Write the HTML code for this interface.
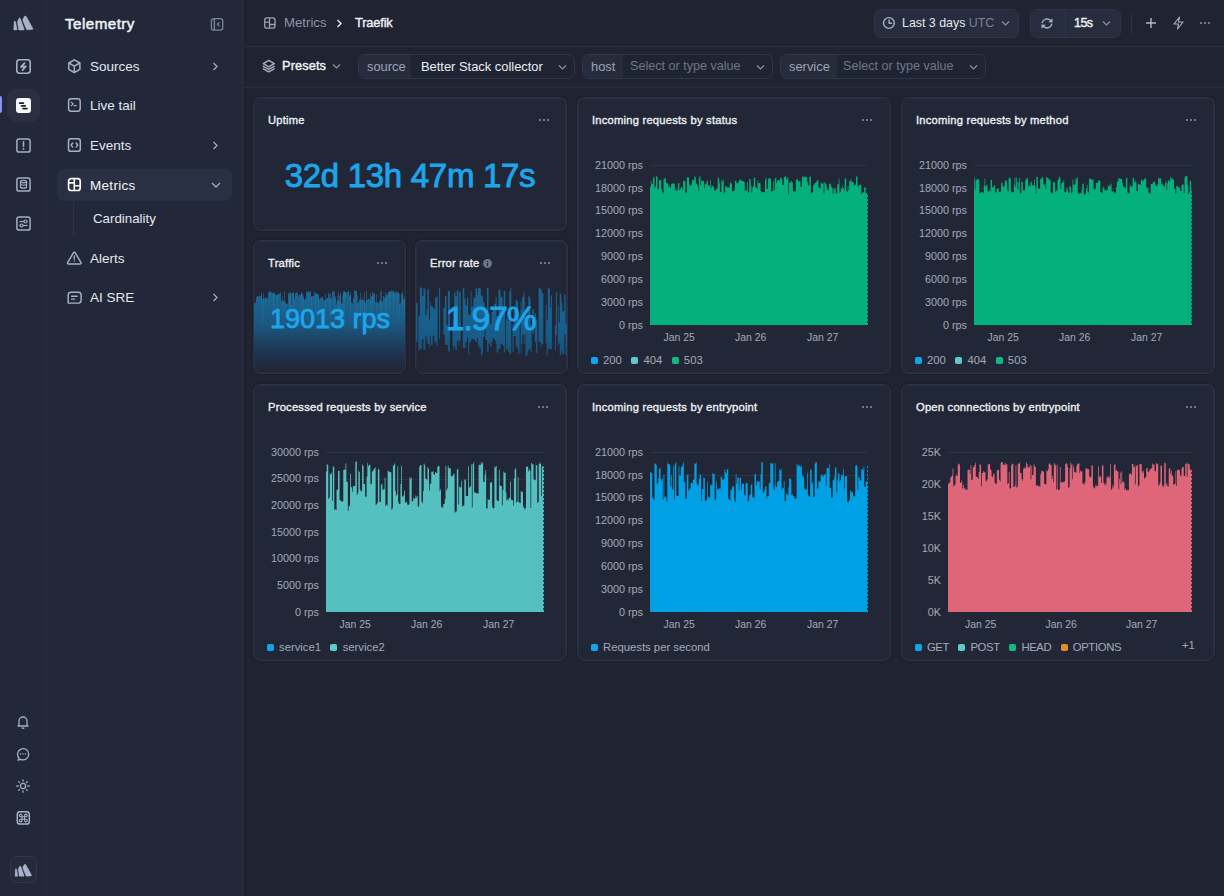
<!DOCTYPE html>
<html><head><meta charset="utf-8">
<style>
*{box-sizing:border-box;margin:0;padding:0}
html,body{width:1224px;height:896px;overflow:hidden;background:#1f2332;font-family:"Liberation Sans",sans-serif;color:#e6e8ee}
.abs{position:absolute}
.rail{position:absolute;left:0;top:0;width:47px;height:896px;background:#222839;border-right:1px solid #282e3f}
.side{position:absolute;left:47px;top:0;width:197px;height:896px;background:#222839;border-right:2px solid #262b3c}
.side:after{content:"";position:absolute;right:-4px;top:0;width:2px;height:896px;background:#1c2030}
.ri{position:absolute;left:16px;width:15px;height:15px}
.ri svg{display:block}
.nav{position:absolute;left:57px;width:175px;height:32px;border-radius:7px}
.nav .ic{position:absolute;left:10px;top:9px;width:14px;height:14px}
.nav .lb{position:absolute;left:33px;top:1px;line-height:32px;font-size:13.5px;color:#e4e7ee}
.nav .ch{position:absolute;left:154px;top:12px}
.topbar{position:absolute;left:244px;top:0;width:980px;height:47px;border-bottom:1px solid #2a2f40}
.fbar{position:absolute;left:244px;top:47px;width:980px;height:41px;border-bottom:1px solid #2a2f40}
.card{position:absolute;background:#222737;border:1px solid #2d3346;border-radius:7px;overflow:hidden;box-shadow:inset 0 0 0 1px rgba(255,255,255,0.022),0 0 2px rgba(0,0,0,0.35)}
.ttl{position:absolute;left:14px;top:16px;font-size:11.2px;font-weight:400;-webkit-text-stroke:0.35px #eceef3;letter-spacing:0.22px;color:#eceef3;line-height:12px;white-space:nowrap}
.dots{position:absolute;top:21px;width:11px;height:3px}
.dots i{position:absolute;top:0;width:2.2px;height:2.2px;border-radius:50%;background:#8c92a4}
.yl{position:absolute;font-size:10.8px;color:#a4a9b8;line-height:12px;text-align:right;white-space:nowrap}
.xl{position:absolute;font-size:10.4px;color:#a4a9b8;line-height:12px;white-space:nowrap}
.grid{position:absolute;height:1px;background:#2e3445}
.lg{position:absolute;font-size:11.3px;color:#a4a9b8;line-height:12px;white-space:nowrap}
.sq{display:inline-block;width:7px;height:7px;border-radius:1.8px;margin-right:5.2px;vertical-align:0px}
.pill{position:absolute;top:54px;height:25px;border:1px solid #30364a;border-radius:7px;background:#1f2433;overflow:hidden}
.pill .k{position:absolute;left:0;top:0;height:23px;background:#272c3d;color:#9ea4b5;font-size:12.9px;line-height:23px;padding-left:8px}
.pill .v{position:absolute;top:0;height:23px;font-size:12.9px;line-height:23px;white-space:nowrap}
.btn{position:absolute;top:9px;height:29px;border:1px solid #30364a;border-radius:7px;background:#272d3e}
</style></head><body>

<!-- RAIL -->
<div class="rail">
  <svg class="abs" style="left:8px;top:10px" width="30" height="26" viewBox="0 0 30 26"><g fill="#aab2cb" stroke="#aab2cb" stroke-width="0.5" stroke-linejoin="round"><path d="M6.2 11.6 Q6.8 10.8 7.5 11.5 L9.0 19.5 Q9 20 8.4 20 L6.4 20 Q5.8 20 5.8 19.4 Z"/><path d="M9.5 12 L10.8 8.6 Q11.5 7.6 12.3 8.4 L16.2 19.2 Q16.3 20 15.6 20 L11.3 20 Q10.7 20 10.6 19.4 Z"/><path d="M14.6 10 L16.2 6.6 Q17.2 5.5 18.3 6.6 L24.8 18.4 Q25.2 19.6 24 19.6 L19.2 19.8 Q18.6 19.8 18.4 19.2 Z"/></g></svg>
  <div class="ri" style="top:58.75px"><svg width="15" height="15" viewBox="0 0 15 15"><rect x="0.8" y="0.8" width="13.4" height="13.4" rx="2.6" fill="none" stroke="#a9b0c6" stroke-width="1.6"/><path d="M8.5 4.1 L5 7.8 L9.8 7.3 L6.5 11.1" fill="none" stroke="#a9b0c6" stroke-width="1.8" stroke-linejoin="round" stroke-linecap="round"/></svg></div>
  <div class="abs" style="left:7px;top:89px;width:33px;height:33px;border-radius:9px;background:#2a3042"></div>
  <div class="abs" style="left:0;top:96px;width:2px;height:17px;background:#8a92f5;border-radius:0 2px 2px 0"></div>
  <div class="ri" style="top:98px"><svg width="15" height="15" viewBox="0 0 15 15"><rect x="0" y="0" width="15" height="15" rx="3" fill="#f7f8fa"/><g stroke="#1c2030" stroke-width="1.7" stroke-linecap="round"><path d="M3.6 5.1 H7.4"/><path d="M5.5 7.8 H9.2"/><path d="M7.1 10.6 H11"/></g></svg></div>
  <div class="ri" style="top:138px"><svg width="15" height="15" viewBox="0 0 15 15"><rect x="0.9" y="0.9" width="13.2" height="13.2" rx="2.2" fill="none" stroke="#a6adc2" stroke-width="1.5"/><path d="M7.5 3.8 V8.3" stroke="#a6adc2" stroke-width="1.6" stroke-linecap="round"/><circle cx="7.5" cy="10.8" r="0.95" fill="#a6adc2"/></svg></div>
  <div class="ri" style="top:177px"><svg width="15" height="15" viewBox="0 0 15 15"><rect x="0.9" y="0.9" width="13.2" height="13.2" rx="2.2" fill="none" stroke="#a6adc2" stroke-width="1.5"/><g fill="none" stroke="#a6adc2" stroke-width="1.2"><ellipse cx="7.5" cy="4.6" rx="3" ry="1.2"/><path d="M4.5 4.6 V10.4 Q7.5 12 10.5 10.4 V4.6"/><path d="M4.5 7.5 Q7.5 9 10.5 7.5"/></g></svg></div>
  <div class="ri" style="top:216px"><svg width="15" height="15" viewBox="0 0 15 15"><rect x="0.9" y="0.9" width="13.2" height="13.2" rx="2.2" fill="none" stroke="#a6adc2" stroke-width="1.5"/><g fill="none" stroke="#a6adc2" stroke-width="1.2"><path d="M3.5 5.5 H11.5"/><path d="M3.5 9.5 H11.5"/></g><circle cx="9.5" cy="5.5" r="1.5" fill="#222839" stroke="#a6adc2" stroke-width="1.2"/><circle cx="5.5" cy="9.5" r="1.5" fill="#222839" stroke="#a6adc2" stroke-width="1.2"/></svg></div>

  <svg class="abs" style="left:16px;top:715px" width="14" height="14" viewBox="0 0 14 14"><g fill="none" stroke="#a6adc2" stroke-width="1.3" stroke-linejoin="round"><path d="M3 10 V6 A4 4 0 0 1 11 6 V10 L12 11 H2 Z"/><path d="M5.8 12.5 A1.3 1.3 0 0 0 8.2 12.5"/></g></svg>
  <svg class="abs" style="left:16px;top:747px" width="14" height="14" viewBox="0 0 14 14"><g fill="none" stroke="#a6adc2" stroke-width="1.3"><path d="M3.2 11.2 A5.6 5.6 0 1 1 5 12.4 L2 13 Z" stroke-linejoin="round"/></g><g fill="#a6adc2"><circle cx="4.6" cy="7" r="0.75"/><circle cx="7" cy="7" r="0.75"/><circle cx="9.4" cy="7" r="0.75"/></g></svg>
  <svg class="abs" style="left:16px;top:779px" width="14" height="14" viewBox="0 0 14 14"><g fill="none" stroke="#a6adc2" stroke-width="1.3" stroke-linecap="round"><circle cx="7" cy="7" r="2.6"/><path d="M7 0.8V2.2M7 11.8V13.2M0.8 7H2.2M11.8 7H13.2M2.6 2.6L3.6 3.6M10.4 10.4L11.4 11.4M2.6 11.4L3.6 10.4M10.4 3.6L11.4 2.6"/></g></svg>
  <svg class="abs" style="left:16px;top:810px;overflow:visible" width="15" height="15" viewBox="0 0 15 15"><rect x="1.3" y="1.7" width="12" height="12.4" rx="2.6" fill="none" stroke="#a9b0c6" stroke-width="1.5"/><path d="M6 6.7 V5.4 A1.3 1.3 0 1 0 4.7 6.7 H9.9 A1.3 1.3 0 1 0 8.6 5.4 V10.6 A1.3 1.3 0 1 0 9.9 9.3 H4.7 A1.3 1.3 0 1 0 6 10.6 Z" fill="none" stroke="#a9b0c6" stroke-width="1.1"/></svg>
  <div class="abs" style="left:10px;top:856px;width:27px;height:27px;border:1px solid #323849;border-radius:7px;background:#242a3a"></div>
  <svg class="abs" style="left:9.5px;top:858.5px" width="26" height="22.5" viewBox="0 0 30 26"><g fill="#aab2cb" stroke="#aab2cb" stroke-width="0.5" stroke-linejoin="round"><path d="M6.2 11.6 Q6.8 10.8 7.5 11.5 L9.0 19.5 Q9 20 8.4 20 L6.4 20 Q5.8 20 5.8 19.4 Z"/><path d="M9.5 12 L10.8 8.6 Q11.5 7.6 12.3 8.4 L16.2 19.2 Q16.3 20 15.6 20 L11.3 20 Q10.7 20 10.6 19.4 Z"/><path d="M14.6 10 L16.2 6.6 Q17.2 5.5 18.3 6.6 L24.8 18.4 Q25.2 19.6 24 19.6 L19.2 19.8 Q18.6 19.8 18.4 19.2 Z"/></g></svg>
</div>

<!-- SIDEBAR -->
<div class="side"></div>
<div class="abs" style="left:65px;top:14px;font-size:15.2px;font-weight:400;-webkit-text-stroke:0.5px #eef0f4;letter-spacing:0.45px;color:#eef0f4;line-height:20px">Telemetry</div>
<svg class="abs" style="left:210px;top:17px" width="14" height="14" viewBox="0 0 14 14"><rect x="1.45" y="1.55" width="11.3" height="11.6" rx="2.3" fill="none" stroke="#7f869a" stroke-width="1.3"/><path d="M4.4 1.6V13.1" stroke="#7f869a" stroke-width="1.3"/><path d="M9 5.6 L7.4 7.3 L9 8.8" fill="none" stroke="#7f869a" stroke-width="1.3" stroke-linecap="round" stroke-linejoin="round"/></svg>

<div class="nav" style="top:50px">
  <svg class="ic" style="overflow:visible" viewBox="0 0 14 14"><g fill="none" stroke="#a9b0c6" stroke-width="1.45" stroke-linejoin="round"><path d="M7.3 0.8 L12.9 4 V10.3 L7.3 13.5 L1.8 10.3 V4 Z"/><path d="M1.8 4 L7.3 7.1 L12.9 4 M7.3 7.1 V13.5"/></g></svg>
  <div class="lb">Sources</div>
  <svg class="ch" width="8" height="9" viewBox="0 0 8 9"><path d="M2.5 1 L6 4.5 L2.5 8" fill="none" stroke="#a4aabb" stroke-width="1.3"/></svg>
</div>
<div class="nav" style="top:89px">
  <svg class="ic" style="overflow:visible" viewBox="0 0 14 14"><rect x="1.6" y="0.8" width="11.6" height="12.4" rx="2.4" fill="none" stroke="#a9b0c6" stroke-width="1.45"/><path d="M4.4 4.2 L6.2 5.9 L4.4 7.6 M7.2 7.6 H9.2" fill="none" stroke="#a9b0c6" stroke-width="1.3" stroke-linecap="round" stroke-linejoin="round"/></svg>
  <div class="lb">Live tail</div>
</div>
<div class="nav" style="top:129px">
  <svg class="ic" style="overflow:visible" viewBox="0 0 14 14"><rect x="1.5" y="0.8" width="11.8" height="12.5" rx="2.4" fill="none" stroke="#a9b0c6" stroke-width="1.5"/><path d="M5.6 5 L4.2 7 L5.6 9.1 M9.2 5 L10.6 7 L9.2 9.1" fill="none" stroke="#a9b0c6" stroke-width="1.4" stroke-linecap="round" stroke-linejoin="round"/></svg>
  <div class="lb">Events</div>
  <svg class="ch" width="8" height="9" viewBox="0 0 8 9"><path d="M2.5 1 L6 4.5 L2.5 8" fill="none" stroke="#a4aabb" stroke-width="1.3"/></svg>
</div>
<div class="nav" style="top:169px;background:#2a3043">
  <svg class="ic" style="overflow:visible" viewBox="0 0 14 14"><rect x="1.6" y="0.7" width="11.6" height="11.8" rx="2.5" fill="none" stroke="#f6f7f9" stroke-width="1.7"/><path d="M7.3 0.8 V12.4 M1.6 4.9 H7.3 M7.3 7.8 H13.2" fill="none" stroke="#f6f7f9" stroke-width="1.6"/></svg>
  <div class="lb" style="color:#f4f5f8;letter-spacing:0.3px">Metrics</div>
  <svg class="ch" style="top:12px;left:154px" width="10" height="8" viewBox="0 0 10 8"><path d="M1 2 L5 6 L9 2" fill="none" stroke="#a4aabb" stroke-width="1.3"/></svg>
</div>
<div class="abs" style="left:73px;top:201px;width:1px;height:34px;background:#2d3345"></div>
<div class="abs" style="left:93px;top:209px;font-size:13.3px;color:#e4e7ee;line-height:20px">Cardinality</div>
<div class="nav" style="top:242px">
  <svg class="ic" style="overflow:visible" viewBox="0 0 14 14"><path d="M6.4 1.8 Q7.3 0.6 8.2 1.8 L14 11.6 Q14.4 12.9 13 12.9 H1.6 Q0.2 12.9 0.6 11.6 Z" fill="none" stroke="#a9b0c6" stroke-width="1.45" stroke-linejoin="round"/><path d="M7.3 5 V8" stroke="#a9b0c6" stroke-width="1.3" stroke-linecap="round"/><circle cx="7.3" cy="10.1" r="0.75" fill="#a9b0c6"/></svg>
  <div class="lb">Alerts</div>
</div>
<div class="nav" style="top:281px">
  <svg class="ic" style="overflow:visible" viewBox="0 0 14 14"><path d="M1.2 13.1 V5 Q1.2 2.2 4 2.2 H11.3 Q14.1 2.2 14.1 5 V10.3 Q14.1 13.1 11.3 13.1 Z" fill="none" stroke="#a9b0c6" stroke-width="1.45" stroke-linejoin="round"/><path d="M4.6 6.2 H10.2 M4.6 9.1 H7.6" fill="none" stroke="#a9b0c6" stroke-width="1.4" stroke-linecap="round"/></svg>
  <div class="lb">AI SRE</div>
  <svg class="ch" width="8" height="9" viewBox="0 0 8 9"><path d="M2.5 1 L6 4.5 L2.5 8" fill="none" stroke="#a4aabb" stroke-width="1.3"/></svg>
</div>

<!-- TOP BAR -->
<div class="topbar"></div>
<svg class="abs" style="left:264px;top:17px;overflow:visible" width="12" height="12" viewBox="0 0 12 12"><rect x="0.7" y="0.8" width="10.3" height="10.3" rx="2.2" fill="none" stroke="#9aa1b6" stroke-width="1.35"/><path d="M5.5 0.9 V11 M0.8 5.2 H5.5 M5.5 7.5 H11" fill="none" stroke="#9aa1b6" stroke-width="1.3"/></svg>
<div class="abs" style="left:284px;top:15px;font-size:13.2px;color:#8e94a7;line-height:16px">Metrics</div>
<svg class="abs" style="left:336px;top:19px" width="7" height="9" viewBox="0 0 7 9"><path d="M1.5 1 L5 4.5 L1.5 8" fill="none" stroke="#e8eaf0" stroke-width="1.4"/></svg>
<div class="abs" style="left:355px;top:15px;font-size:12.8px;letter-spacing:-0.15px;font-weight:400;-webkit-text-stroke:0.4px #eef0f4;color:#eef0f4;line-height:16px">Traefik</div>

<div class="btn" style="left:874px;width:145px">
  <svg class="abs" style="left:7px;top:6px" width="14" height="14" viewBox="0 0 14 14"><circle cx="6.9" cy="7" r="5.4" fill="none" stroke="#a9b0c6" stroke-width="1.4"/><path d="M7.1 3.9 V7.2 H9.6" fill="none" stroke="#a9b0c6" stroke-width="1.4" stroke-linecap="round" stroke-linejoin="round"/></svg>
  <div class="abs" style="left:27px;top:6px;font-size:12.4px;color:#e6e8ee;line-height:15px;white-space:nowrap">Last 3 days <span style="color:#7b8194">UTC</span></div>
  <svg class="abs" style="left:126px;top:10px" width="9" height="7" viewBox="0 0 9 7"><path d="M1 1.5 L4.5 5 L8 1.5" fill="none" stroke="#8d93a6" stroke-width="1.2"/></svg>
</div>
<div class="btn" style="left:1030px;width:91px">
  <div class="abs" style="left:34px;top:0;width:1px;height:27px;background:#30364a"></div>
  <svg class="abs" style="left:8.5px;top:7px" width="14" height="13" viewBox="0 0 14 13"><g fill="none" stroke="#a9b0c6" stroke-width="1.4" stroke-linecap="round"><path d="M2.2 5.6 A4.9 4.9 0 0 1 10.6 3.6"/><path d="M11.8 7.2 A4.9 4.9 0 0 1 3.4 9.3"/></g><g fill="#a9b0c6"><path d="M12.4 1.2 L12.6 5.6 L8.4 5.2 Z"/><path d="M1.6 11.8 L1.4 7.4 L5.6 7.8 Z"/></g></svg>
  <div class="abs" style="left:43px;top:6px;font-size:12.6px;letter-spacing:-0.6px;font-weight:400;-webkit-text-stroke:0.4px #eef0f4;color:#eef0f4;line-height:15px">15s</div>
  <svg class="abs" style="left:71px;top:10px" width="9" height="7" viewBox="0 0 9 7"><path d="M1 1.5 L4.5 5 L8 1.5" fill="none" stroke="#8d93a6" stroke-width="1.2"/></svg>
</div>
<div class="abs" style="left:1131px;top:13px;width:1px;height:21px;background:#2e3446"></div>
<svg class="abs" style="left:1145px;top:17px" width="12" height="12" viewBox="0 0 12 12"><path d="M6 1 V11 M1 6 H11" stroke="#b4b9c8" stroke-width="1.4"/></svg>
<svg class="abs" style="left:1172px;top:16px" width="13" height="14" viewBox="0 0 13 14"><path d="M7.5 1 L2 8 H6.5 L5.5 13 L11 6 H6.5 Z" fill="none" stroke="#a6adc2" stroke-width="1.2" stroke-linejoin="round"/></svg>
<div class="abs" style="left:1200px;top:22px;width:11px;height:3px"><i class="abs" style="left:0;width:2.2px;height:2.2px;border-radius:50%;background:#8d93a6"></i><i class="abs" style="left:4px;width:2.2px;height:2.2px;border-radius:50%;background:#8d93a6"></i><i class="abs" style="left:8px;width:2.2px;height:2.2px;border-radius:50%;background:#8d93a6"></i></div>

<!-- FILTER BAR -->
<div class="fbar"></div>
<svg class="abs" style="left:262px;top:59px;overflow:visible" width="14" height="14" viewBox="0 0 14 14"><g fill="none" stroke="#a9b0c6" stroke-width="1.4" stroke-linejoin="round" stroke-linecap="round"><path d="M6.75 1.4 L12.2 4.6 L6.75 7.8 L1.3 4.6 Z"/><path d="M1.3 7.3 L6.75 10.3 L12.2 7.3"/><path d="M1.3 9.9 L6.75 12.8 L12.2 9.9"/></g></svg>
<div class="abs" style="left:282px;top:58px;font-size:12.8px;letter-spacing:0.1px;font-weight:400;-webkit-text-stroke:0.4px #eef0f4;color:#eef0f4;line-height:16px">Presets</div>
<svg class="abs" style="left:332px;top:63px" width="9" height="7" viewBox="0 0 9 7"><path d="M1 1.5 L4.5 5 L8 1.5" fill="none" stroke="#8d93a6" stroke-width="1.2"/></svg>

<div class="pill" style="left:358px;width:217px">
  <div class="k" style="width:52px">source</div>
  <div class="v" style="left:62px;color:#eceef3">Better Stack collector</div>
  <svg class="abs" style="left:199px;top:9px" width="9" height="7" viewBox="0 0 9 7"><path d="M1 1.5 L4.5 5 L8 1.5" fill="none" stroke="#8d93a6" stroke-width="1.2"/></svg>
</div>
<div class="pill" style="left:582px;width:191px">
  <div class="k" style="width:40px">host</div>
  <div class="v" style="left:47px;color:#6f7588;font-size:12.6px">Select or type value</div>
  <svg class="abs" style="left:172.5px;top:9px" width="9" height="7" viewBox="0 0 9 7"><path d="M1 1.5 L4.5 5 L8 1.5" fill="none" stroke="#8d93a6" stroke-width="1.2"/></svg>
</div>
<div class="pill" style="left:780px;width:206px">
  <div class="k" style="width:56px">service</div>
  <div class="v" style="left:62px;color:#6f7588;font-size:12.6px">Select or type value</div>
  <svg class="abs" style="left:187.5px;top:9px" width="9" height="7" viewBox="0 0 9 7"><path d="M1 1.5 L4.5 5 L8 1.5" fill="none" stroke="#8d93a6" stroke-width="1.2"/></svg>
</div>

<!-- CARDS -->
<!-- Uptime -->
<div class="card" style="left:253px;top:97px;width:314px;height:134px">
  <div class="ttl">Uptime</div>
  <div class="dots" style="left:285px"><i style="left:0"></i><i style="left:4px"></i><i style="left:8px"></i></div>
  <div class="abs" style="left:0;top:59.7px;width:312px;text-align:center;font-size:33px;letter-spacing:-0.3px;font-weight:400;-webkit-text-stroke:0.9px #1ca5ea;color:#1ca5ea;line-height:36px">32d 13h 47m 17s</div>
</div>

<!-- Traffic -->
<div class="card" style="left:253px;top:240px;width:153px;height:134px">
  <svg class="abs" style="left:0;top:49px" width="152" height="80" viewBox="0 0 152 80" preserveAspectRatio="none">
    <defs><linearGradient id="tg" gradientUnits="userSpaceOnUse" x1="0" y1="0" x2="0" y2="80"><stop offset="0" stop-color="#1b6893"/><stop offset="0.4" stop-color="#1a5a84"/><stop offset="0.62" stop-color="#1d4566"/><stop offset="0.8" stop-color="#1f3350"/><stop offset="1" stop-color="#222737"/></linearGradient>
    <linearGradient id="tg2" gradientUnits="userSpaceOnUse" x1="0" y1="0" x2="0" y2="40"><stop offset="0" stop-color="#2a7eaa" stop-opacity="0.55"/><stop offset="1" stop-color="#2a7eaa" stop-opacity="0"/></linearGradient></defs>
    <path fill="url(#tg)" d="M0 80V13.0h1.02V80zM1 80V12.8h1.02V80zM2 80V7.1h1.02V80zM3 80V6.3h1.02V80zM4 80V6.7h1.02V80zM5 80V5.8h1.02V80zM6 80V6.3h1.02V80zM7 80V2.7h1.02V80zM8 80V8.9h1.02V80zM9 80V8.5h1.02V80zM10 80V8.6h1.02V80zM11 80V7.7h1.02V80zM12 80V7.4h1.02V80zM13 80V8.5h1.02V80zM14 80V2.4h1.02V80zM15 80V1.6h1.02V80zM16 80V1.5h1.02V80zM17 80V2.3h1.02V80zM18 80V3.1h1.02V80zM19 80V2.5h1.02V80zM20 80V2.6h1.02V80zM21 80V5.0h1.02V80zM22 80V5.0h1.02V80zM23 80V4.6h1.02V80zM24 80V4.2h1.02V80zM25 80V3.7h1.02V80zM26 80V2.7h1.02V80zM27 80V10.5h1.02V80zM28 80V11.4h1.02V80zM29 80V10.5h1.02V80zM30 80V11.0h1.02V80zM31 80V12.4h1.02V80zM32 80V14.0h1.02V80zM33 80V13.3h1.02V80zM34 80V3.4h1.02V80zM35 80V2.8h1.02V80zM36 80V2.7h1.02V80zM37 80V14.4h1.02V80zM38 80V2.9h1.02V80zM39 80V2.4h1.02V80zM40 80V8.8h1.02V80zM41 80V3.5h1.02V80zM42 80V2.3h1.02V80zM43 80V3.3h1.02V80zM44 80V6.4h1.02V80zM45 80V4.8h1.02V80zM46 80V5.0h1.02V80zM47 80V3.7h1.02V80zM48 80V4.1h1.02V80zM49 80V8.0h1.02V80zM50 80V9.8h1.02V80zM51 80V8.2h1.02V80zM52 80V1.8h1.02V80zM53 80V2.2h1.02V80zM54 80V1.1h1.02V80zM55 80V2.1h1.02V80zM56 80V1.3h1.02V80zM57 80V7.1h1.02V80zM58 80V6.1h1.02V80zM59 80V6.3h1.02V80zM60 80V2.2h1.02V80zM61 80V3.7h1.02V80zM62 80V3.0h1.02V80zM63 80V4.1h1.02V80zM64 80V4.5h1.02V80zM65 80V9.3h1.02V80zM66 80V8.1h1.02V80zM67 80V7.5h1.02V80zM68 80V6.5h1.02V80zM69 80V9.3h1.02V80zM70 80V10.4h1.02V80zM71 80V9.9h1.02V80zM72 80V7.9h1.02V80zM73 80V8.0h1.02V80zM74 80V3.5h1.02V80zM75 80V8.0h1.02V80zM76 80V9.2h1.02V80zM77 80V7.8h1.02V80zM78 80V1.7h1.02V80zM79 80V1.2h1.02V80zM80 80V8.2h1.02V80zM81 80V6.4h1.02V80zM82 80V13.6h1.02V80zM83 80V10.2h1.02V80zM84 80V11.1h1.02V80zM85 80V10.4h1.02V80zM86 80V6.2h1.02V80zM87 80V12.9h1.02V80zM88 80V14.1h1.02V80zM89 80V1.5h1.02V80zM90 80V1.2h1.02V80zM91 80V2.0h1.02V80zM92 80V2.6h1.02V80zM93 80V2.2h1.02V80zM94 80V1.0h1.02V80zM95 80V5.2h1.02V80zM96 80V5.6h1.02V80zM97 80V12.6h1.02V80zM98 80V13.6h1.02V80zM99 80V8.3h1.02V80zM100 80V0.7h1.02V80zM101 80V0.7h1.02V80zM102 80V0.8h1.02V80zM103 80V13.0h1.02V80zM104 80V12.3h1.02V80zM105 80V9.5h1.02V80zM106 80V9.5h1.02V80zM107 80V9.7h1.02V80zM108 80V9.5h1.02V80zM109 80V10.6h1.02V80zM110 80V10.4h1.02V80zM111 80V13.0h1.02V80zM112 80V9.0h1.02V80zM113 80V9.9h1.02V80zM114 80V8.8h1.02V80zM115 80V8.8h1.02V80zM116 80V10.2h1.02V80zM117 80V6.2h1.02V80zM118 80V6.6h1.02V80zM119 80V3.0h1.02V80zM120 80V3.7h1.02V80zM121 80V12.3h1.02V80zM122 80V12.6h1.02V80zM123 80V12.4h1.02V80zM124 80V12.9h1.02V80zM125 80V10.7h1.02V80zM126 80V10.8h1.02V80zM127 80V11.5h1.02V80zM128 80V11.5h1.02V80zM129 80V6.3h1.02V80zM130 80V7.4h1.02V80zM131 80V7.7h1.02V80zM132 80V5.1h1.02V80zM133 80V4.0h1.02V80zM134 80V2.1h1.02V80zM135 80V1.8h1.02V80zM136 80V1.3h1.02V80zM137 80V0.8h1.02V80zM138 80V1.5h1.02V80zM139 80V0.6h1.02V80zM140 80V2.8h1.02V80zM141 80V2.6h1.02V80zM142 80V1.5h1.02V80zM143 80V2.4h1.02V80zM144 80V2.6h1.02V80zM145 80V14.2h1.02V80zM146 80V13.2h1.02V80zM147 80V4.1h1.02V80zM148 80V4.2h1.02V80zM149 80V9.3h1.02V80zM150 80V9.4h1.02V80zM151 80V9.6h1.02V80z"/>
    <path fill="url(#tg2)" d="M7 40V6.6h1V40zM9 40V3.7h1V40zM19 40V5.3h1V40zM23 40V6.4h1V40zM28 40V6.5h1V40zM30 40V1.5h1V40zM35 40V5.9h1V40zM36 40V5.8h1V40zM37 40V3.0h1V40zM39 40V1.9h1V40zM47 40V2.3h1V40zM49 40V5.4h1V40zM54 40V3.3h1V40zM57 40V6.1h1V40zM61 40V4.2h1V40zM64 40V6.8h1V40zM71 40V4.2h1V40zM75 40V3.8h1V40zM76 40V3.6h1V40zM80 40V2.1h1V40zM83 40V5.7h1V40zM84 40V2.2h1V40zM85 40V5.1h1V40zM86 40V3.1h1V40zM88 40V5.4h1V40zM89 40V4.1h1V40zM90 40V2.2h1V40zM96 40V2.2h1V40zM103 40V5.4h1V40zM106 40V2.9h1V40zM108 40V7.0h1V40zM110 40V2.4h1V40zM112 40V1.6h1V40zM116 40V3.4h1V40zM118 40V2.2h1V40zM122 40V4.0h1V40zM126 40V1.4h1V40zM127 40V1.2h1V40zM131 40V2.1h1V40zM132 40V6.0h1V40zM135 40V1.4h1V40zM139 40V3.8h1V40zM143 40V5.2h1V40zM145 40V3.7h1V40zM148 40V2.0h1V40zM150 40V6.4h1V40z"/>
  </svg>
  <div class="ttl">Traffic</div>
  <div class="dots" style="left:123px"><i style="left:0"></i><i style="left:4px"></i><i style="left:8px"></i></div>
  <div class="abs" style="left:0;top:63px;width:152px;text-align:center;font-size:27px;letter-spacing:0px;font-weight:400;-webkit-text-stroke:0.75px #1ca5ea;color:#1ca5ea;line-height:30px">19013 rps</div>
</div>

<!-- Error rate -->
<div class="card" style="left:415px;top:240px;width:153px;height:134px">
  <svg class="abs" style="left:0;top:45px" width="152" height="75" viewBox="0 0 152 75">
    <defs><linearGradient id="eg" gradientUnits="userSpaceOnUse" x1="0" y1="0" x2="0" y2="72"><stop offset="0" stop-color="#1a6592"/><stop offset="0.6" stop-color="#185e8a"/><stop offset="1" stop-color="#16537c"/></linearGradient></defs>
    <path fill="url(#eg)" d="M0.00 17.1V56.3h1.50V17.1zM2.40 29.8V64.2h1.50V29.8zM3.90 1.5V62.7h2.00V1.5zM5.90 9.9V52.9h1.50V9.9zM7.40 2.5V64.1h2.00V2.5zM9.40 29.2V49.7h1.20V29.2zM10.60 22.8V53.2h0.80V22.8zM11.40 3.3V58.1h1.50V3.3zM12.90 33.4V61.2h1.00V33.4zM13.90 16.2V49.6h0.80V16.2zM14.70 19.9V59.3h2.00V19.9zM16.70 21.9V49.5h1.50V21.9zM18.20 22.9V56.5h1.00V22.9zM19.20 11.5V55.4h1.20V11.5zM20.40 10.7V60.1h1.20V10.7zM23.10 2.0V52.7h1.00V2.0zM27.40 21.7V48.7h1.50V21.7zM28.90 9.9V58.8h1.50V9.9zM30.40 38.9V59.0h1.50V38.9zM31.90 5.2V65.5h2.00V5.2zM36.60 39.4V59.9h0.80V39.4zM37.40 33.4V63.7h0.80V33.4zM38.20 6.3V60.5h1.20V6.3zM39.40 10.4V64.1h1.50V10.4zM40.90 4.5V54.9h1.50V4.5zM42.40 36.5V60.2h0.80V36.5zM43.20 5.9V54.8h1.50V5.9zM46.80 2.2V61.5h1.50V2.2zM48.30 12.7V61.9h1.20V12.7zM49.50 19.2V56.3h1.50V19.2zM51.00 11.5V51.6h1.20V11.5zM52.20 29.2V68.8h1.00V29.2zM53.20 28.8V57.0h1.50V28.8zM54.70 5.2V54.4h0.80V5.2zM55.50 20.6V52.9h2.00V20.6zM57.50 11.8V53.8h2.00V11.8zM59.50 2.7V55.9h1.50V2.7zM61.00 8.9V52.1h0.80V8.9zM61.80 1.8V59.6h1.50V1.8zM63.30 2.2V62.0h1.50V2.2zM64.80 9.5V69.8h1.50V9.5zM66.30 10.8V67.7h0.80V10.8zM67.10 16.6V51.3h1.50V16.6zM69.50 31.4V53.9h1.50V31.4zM71.00 2.1V66.0h1.50V2.1zM72.50 27.4V57.4h1.50V27.4zM74.00 38.0V61.1h1.50V38.0zM75.50 26.1V55.7h1.20V26.1zM76.70 21.5V51.9h1.50V21.5zM78.20 17.7V53.9h1.50V17.7zM79.70 10.8V57.7h0.80V10.8zM80.50 29.9V66.4h2.00V29.9zM82.50 3.6V63.1h2.00V3.6zM84.50 11.2V58.1h2.00V11.2zM86.50 27.8V59.7h1.20V27.8zM87.70 5.0V66.4h1.50V5.0zM90.10 32.7V63.4h2.00V32.7zM92.10 35.1V66.0h1.20V35.1zM93.30 5.8V68.4h1.20V5.8zM94.50 2.0V66.9h0.80V2.0zM96.50 38.5V66.0h1.20V38.5zM97.70 20.4V50.1h2.00V20.4zM99.70 13.9V60.5h1.50V13.9zM101.20 16.1V63.0h1.00V16.1zM102.20 31.3V67.8h1.50V31.3zM104.60 15.6V67.9h0.80V15.6zM105.40 23.8V58.2h0.80V23.8zM106.20 11.1V49.2h1.50V11.1zM107.70 6.4V58.1h1.00V6.4zM108.70 36.0V48.1h0.80V36.0zM109.50 37.7V70.1h2.00V37.7zM111.50 19.5V66.7h0.80V19.5zM112.30 9.8V63.3h1.00V9.8zM113.30 11.7V63.4h1.20V11.7zM114.50 38.8V65.9h1.20V38.8zM116.30 23.2V47.5h1.50V23.2zM118.70 27.2V56.1h1.20V27.2zM119.90 33.4V66.9h1.50V33.4zM122.60 2.3V56.1h2.00V2.3zM124.60 3.6V60.8h1.20V3.6zM125.80 7.0V58.0h1.50V7.0zM129.70 19.1V57.0h1.00V19.1zM130.70 34.6V69.2h1.20V34.6zM131.90 2.4V62.7h2.00V2.4zM133.90 21.0V62.5h1.00V21.0zM134.90 9.6V63.5h1.00V9.6zM138.90 38.9V63.8h1.00V38.9zM139.90 6.3V49.1h1.00V6.3zM141.80 19.6V59.4h0.80V19.6zM142.60 36.2V57.3h1.20V36.2zM143.80 7.7V68.9h1.50V7.7zM145.30 17.0V65.0h1.00V17.0zM146.30 25.3V67.7h2.00V25.3zM148.30 8.8V47.9h1.20V8.8zM149.50 37.8V68.9h1.20V37.8zM150.70 16.7V61.6h1.00V16.7zM151.70 12.5V48.7h1.00V12.5z"/>
  </svg>
  <div class="ttl">Error rate <span style="display:inline-block;position:relative;width:9px;height:9px;border-radius:50%;background:#6b7285;vertical-align:-1px;margin-left:0.5px"><i style="position:absolute;left:4px;top:2px;width:1.2px;height:1px;background:#222737"></i><i style="position:absolute;left:4px;top:4px;width:1.2px;height:3px;background:#222737"></i></span></div>
  <div class="dots" style="left:124px"><i style="left:0"></i><i style="left:4px"></i><i style="left:8px"></i></div>
  <div class="abs" style="left:-1.4px;top:60px;width:152px;text-align:center;font-size:33.5px;letter-spacing:-1.1px;font-weight:400;-webkit-text-stroke:0.9px #1ca5ea;color:#1ca5ea;line-height:36px">1.97%</div>
</div>

<div class="card" style="left:577px;top:97px;width:314px;height:277px">
  <div class="ttl">Incoming requests by status</div>
  <div class="dots" style="left:284px"><i style="left:0"></i><i style="left:4px"></i><i style="left:8px"></i></div>
  <div class="grid" style="left:72px;top:67.0px;width:218px"></div><div class="grid" style="left:72px;top:89.9px;width:218px"></div><div class="grid" style="left:72px;top:112.7px;width:218px"></div><div class="grid" style="left:72px;top:135.6px;width:218px"></div><div class="grid" style="left:72px;top:158.4px;width:218px"></div><div class="grid" style="left:72px;top:181.3px;width:218px"></div><div class="grid" style="left:72px;top:204.1px;width:218px"></div><div class="grid" style="left:72px;top:227.0px;width:218px"></div>
  <div class="yl" style="right:247px;top:60.7px">21000 rps</div><div class="yl" style="right:247px;top:83.6px">18000 rps</div><div class="yl" style="right:247px;top:106.4px">15000 rps</div><div class="yl" style="right:247px;top:129.3px">12000 rps</div><div class="yl" style="right:247px;top:152.1px">9000 rps</div><div class="yl" style="right:247px;top:175.0px">6000 rps</div><div class="yl" style="right:247px;top:197.8px">3000 rps</div><div class="yl" style="right:247px;top:220.7px">0 rps</div>
  <svg class="abs" style="left:72px;top:67px" width="218" height="161" viewBox="0 0 218 161"><path fill="#04b17d" d="M0.00 160V22.2h0.77V160zM0.75 160V16.0h0.77V160zM1.50 160V19.5h0.77V160zM2.26 160V19.1h0.77V160zM3.01 160V12.8h0.77V160zM3.76 160V11.8h0.77V160zM4.51 160V23.1h0.77V160zM5.26 160V20.9h0.77V160zM6.01 160V10.9h0.77V160zM6.77 160V12.1h0.77V160zM7.52 160V24.6h0.77V160zM8.27 160V24.1h0.77V160zM9.02 160V15.2h0.77V160zM9.77 160V15.4h0.77V160zM10.52 160V14.7h0.77V160zM11.28 160V24.0h0.77V160zM12.03 160V27.5h0.77V160zM12.78 160V28.7h0.77V160zM13.53 160V13.6h0.77V160zM14.28 160V13.8h0.77V160zM15.03 160V12.8h0.77V160zM15.79 160V17.9h0.77V160zM16.54 160V17.8h0.77V160zM17.29 160V18.4h0.77V160zM18.04 160V21.4h0.77V160zM18.79 160V19.6h0.77V160zM19.54 160V22.7h0.77V160zM20.30 160V22.6h0.77V160zM21.05 160V19.2h0.77V160zM21.80 160V18.3h0.77V160zM22.55 160V19.0h0.77V160zM23.30 160V18.0h0.77V160zM24.06 160V18.9h0.77V160zM24.81 160V25.6h0.77V160zM25.56 160V24.1h0.77V160zM26.31 160V25.5h0.77V160zM27.06 160V25.2h0.77V160zM27.81 160V18.5h0.77V160zM28.57 160V17.9h0.77V160zM29.32 160V25.0h0.77V160zM30.07 160V24.0h0.77V160zM30.82 160V22.0h0.77V160zM31.57 160V22.2h0.77V160zM32.32 160V25.1h0.77V160zM33.08 160V15.6h0.77V160zM33.83 160V16.6h0.77V160zM34.58 160V15.7h0.77V160zM35.33 160V27.8h0.77V160zM36.08 160V27.7h0.77V160zM36.83 160V12.3h0.77V160zM37.59 160V12.4h0.77V160zM38.34 160V12.5h0.77V160zM39.09 160V19.6h0.77V160zM39.84 160V21.1h0.77V160zM40.59 160V19.8h0.77V160zM41.34 160V19.6h0.77V160zM42.10 160V15.0h0.77V160zM42.85 160V15.0h0.77V160zM43.60 160V14.7h0.77V160zM44.35 160V11.6h0.77V160zM45.10 160V12.2h0.77V160zM45.86 160V18.4h0.77V160zM46.61 160V18.9h0.77V160zM47.36 160V20.4h0.77V160zM48.11 160V26.2h0.77V160zM48.86 160V13.1h0.77V160zM49.61 160V11.0h0.77V160zM50.37 160V20.0h0.77V160zM51.12 160V14.9h0.77V160zM51.87 160V16.2h0.77V160zM52.62 160V15.8h0.77V160zM53.37 160V16.0h0.77V160zM54.12 160V23.3h0.77V160zM54.88 160V19.0h0.77V160zM55.63 160V19.4h0.77V160zM56.38 160V16.6h0.77V160zM57.13 160V15.4h0.77V160zM57.88 160V19.7h0.77V160zM58.63 160V20.7h0.77V160zM59.39 160V21.2h0.77V160zM60.14 160V15.2h0.77V160zM60.89 160V23.3h0.77V160zM61.64 160V20.2h0.77V160zM62.39 160V21.2h0.77V160zM63.14 160V21.5h0.77V160zM63.90 160V25.5h0.77V160zM64.65 160V24.8h0.77V160zM65.40 160V25.8h0.77V160zM66.15 160V24.0h0.77V160zM66.90 160V23.7h0.77V160zM67.66 160V12.0h0.77V160zM68.41 160V13.7h0.77V160zM69.16 160V17.7h0.77V160zM69.91 160V27.1h0.77V160zM70.66 160V26.7h0.77V160zM71.41 160V14.7h0.77V160zM72.17 160V16.8h0.77V160zM72.92 160V14.8h0.77V160zM73.67 160V28.5h0.77V160zM74.42 160V26.9h0.77V160zM75.17 160V21.3h0.77V160zM75.92 160V21.7h0.77V160zM76.68 160V21.4h0.77V160zM77.43 160V23.1h0.77V160zM78.18 160V22.6h0.77V160zM78.93 160V22.3h0.77V160zM79.68 160V18.3h0.77V160zM80.43 160V17.2h0.77V160zM81.19 160V18.6h0.77V160zM81.94 160V26.1h0.77V160zM82.69 160V26.5h0.77V160zM83.44 160V25.8h0.77V160zM84.19 160V24.8h0.77V160zM84.94 160V15.6h0.77V160zM85.70 160V16.0h0.77V160zM86.45 160V18.4h0.77V160zM87.20 160V18.0h0.77V160zM87.95 160V17.5h0.77V160zM88.70 160V16.1h0.77V160zM89.46 160V14.6h0.77V160zM90.21 160V14.8h0.77V160zM90.96 160V15.8h0.77V160zM91.71 160V15.5h0.77V160zM92.46 160V16.0h0.77V160zM93.21 160V16.5h0.77V160zM93.97 160V16.8h0.77V160zM94.72 160V25.7h0.77V160zM95.47 160V25.1h0.77V160zM96.22 160V25.3h0.77V160zM96.97 160V16.9h0.77V160zM97.72 160V27.3h0.77V160zM98.48 160V27.4h0.77V160zM99.23 160V13.7h0.77V160zM99.98 160V14.5h0.77V160zM100.73 160V20.8h0.77V160zM101.48 160V27.8h0.77V160zM102.23 160V22.4h0.77V160zM102.99 160V21.3h0.77V160zM103.74 160V12.3h0.77V160zM104.49 160V12.9h0.77V160zM105.24 160V22.3h0.77V160zM105.99 160V22.3h0.77V160zM106.74 160V24.2h0.77V160zM107.50 160V15.5h0.77V160zM108.25 160V17.9h0.77V160zM109.00 160V18.1h0.77V160zM109.75 160V18.2h0.77V160zM110.50 160V26.1h0.77V160zM111.26 160V27.4h0.77V160zM112.01 160V27.0h0.77V160zM112.76 160V26.9h0.77V160zM113.51 160V26.8h0.77V160zM114.26 160V27.4h0.77V160zM115.01 160V14.7h0.77V160zM115.77 160V12.8h0.77V160zM116.52 160V23.8h0.77V160zM117.27 160V24.0h0.77V160zM118.02 160V13.6h0.77V160zM118.77 160V13.7h0.77V160zM119.52 160V12.8h0.77V160zM120.28 160V13.7h0.77V160zM121.03 160V26.6h0.77V160zM121.78 160V26.3h0.77V160zM122.53 160V25.9h0.77V160zM123.28 160V16.3h0.77V160zM124.03 160V24.9h0.77V160zM124.79 160V13.3h0.77V160zM125.54 160V12.7h0.77V160zM126.29 160V17.9h0.77V160zM127.04 160V15.5h0.77V160zM127.79 160V15.0h0.77V160zM128.54 160V14.8h0.77V160zM129.30 160V16.1h0.77V160zM130.05 160V12.4h0.77V160zM130.80 160V13.9h0.77V160zM131.55 160V12.9h0.77V160zM132.30 160V20.1h0.77V160zM133.06 160V20.1h0.77V160zM133.81 160V12.3h0.77V160zM134.56 160V11.3h0.77V160zM135.31 160V11.6h0.77V160zM136.06 160V13.9h0.77V160zM136.81 160V13.9h0.77V160zM137.57 160V12.1h0.77V160zM138.32 160V29.5h0.77V160zM139.07 160V17.4h0.77V160zM139.82 160V17.7h0.77V160zM140.57 160V17.6h0.77V160zM141.32 160V15.8h0.77V160zM142.08 160V17.6h0.77V160zM142.83 160V25.9h0.77V160zM143.58 160V26.5h0.77V160zM144.33 160V26.4h0.77V160zM145.08 160V26.2h0.77V160zM145.83 160V14.6h0.77V160zM146.59 160V15.2h0.77V160zM147.34 160V14.0h0.77V160zM148.09 160V16.5h0.77V160zM148.84 160V16.3h0.77V160zM149.59 160V15.7h0.77V160zM150.34 160V21.2h0.77V160zM151.10 160V22.0h0.77V160zM151.85 160V12.5h0.77V160zM152.60 160V10.9h0.77V160zM153.35 160V12.3h0.77V160zM154.10 160V11.7h0.77V160zM154.86 160V12.3h0.77V160zM155.61 160V12.0h0.77V160zM156.36 160V12.1h0.77V160zM157.11 160V16.8h0.77V160zM157.86 160V20.6h0.77V160zM158.61 160V20.4h0.77V160zM159.37 160V11.7h0.77V160zM160.12 160V11.6h0.77V160zM160.87 160V28.6h0.77V160zM161.62 160V27.9h0.77V160zM162.37 160V26.9h0.77V160zM163.12 160V20.1h0.77V160zM163.88 160V19.5h0.77V160zM164.63 160V17.7h0.77V160zM165.38 160V17.9h0.77V160zM166.13 160V16.7h0.77V160zM166.88 160V15.2h0.77V160zM167.63 160V15.3h0.77V160zM168.39 160V22.5h0.77V160zM169.14 160V22.8h0.77V160zM169.89 160V23.5h0.77V160zM170.64 160V17.4h0.77V160zM171.39 160V18.5h0.77V160zM172.14 160V18.6h0.77V160zM172.90 160V18.2h0.77V160zM173.65 160V28.3h0.77V160zM174.40 160V17.3h0.77V160zM175.15 160V17.9h0.77V160zM175.90 160V19.2h0.77V160zM176.66 160V23.7h0.77V160zM177.41 160V25.2h0.77V160zM178.16 160V25.3h0.77V160zM178.91 160V19.0h0.77V160zM179.66 160V18.3h0.77V160zM180.41 160V19.7h0.77V160zM181.17 160V21.9h0.77V160zM181.92 160V23.5h0.77V160zM182.67 160V28.7h0.77V160zM183.42 160V22.5h0.77V160zM184.17 160V24.4h0.77V160zM184.92 160V22.9h0.77V160zM185.68 160V28.9h0.77V160zM186.43 160V27.7h0.77V160zM187.18 160V19.5h0.77V160zM187.93 160V19.1h0.77V160zM188.68 160V13.8h0.77V160zM189.43 160V27.8h0.77V160zM190.19 160V26.9h0.77V160zM190.94 160V23.4h0.77V160zM191.69 160V23.9h0.77V160zM192.44 160V20.5h0.77V160zM193.19 160V22.8h0.77V160zM193.94 160V25.4h0.77V160zM194.70 160V13.4h0.77V160zM195.45 160V13.6h0.77V160zM196.20 160V25.9h0.77V160zM196.95 160V26.9h0.77V160zM197.70 160V21.0h0.77V160zM198.46 160V25.1h0.77V160zM199.21 160V15.8h0.77V160zM199.96 160V16.1h0.77V160zM200.71 160V14.2h0.77V160zM201.46 160V17.1h0.77V160zM202.21 160V17.2h0.77V160zM202.97 160V17.0h0.77V160zM203.72 160V20.4h0.77V160zM204.47 160V19.6h0.77V160zM205.22 160V19.8h0.77V160zM205.97 160V11.4h0.77V160zM206.72 160V11.4h0.77V160zM207.48 160V20.6h0.77V160zM208.23 160V21.5h0.77V160zM208.98 160V20.5h0.77V160zM209.73 160V19.8h0.77V160zM210.48 160V19.4h0.77V160zM211.23 160V29.2h0.77V160zM211.99 160V27.7h0.77V160zM212.74 160V27.0h0.77V160zM213.49 160V28.1h0.77V160zM214.24 160V22.1h0.77V160zM214.99 160V23.1h0.77V160zM215.74 160V28.3h0.77V160zM216.50 160V28.0h0.77V160zM217.25 160V29.1h0.77V160z"/><rect x="0" y="160" width="218" height="1" fill="#1b1f2b" opacity="0.6"/><line x1="217.5" y1="0" x2="217.5" y2="160" stroke="#222737" stroke-width="1" stroke-dasharray="2 2" opacity="0.8"/></svg>
  <div class="xl" style="left:85.5px;top:234px">Jan 25</div><div class="xl" style="left:157.0px;top:234px">Jan 26</div><div class="xl" style="left:229.0px;top:234px">Jan 27</div>
  <div class="lg" style="left:12.8px;top:255.5px"><span class="sq" style="background:#0ea5e9"></span><span style="margin-right:9.4px">200</span><span class="sq" style="background:#5ccaca"></span><span style="margin-right:9.4px">404</span><span class="sq" style="background:#10b981"></span><span style="margin-right:9.4px">503</span></div>
  
</div>
<div class="card" style="left:901px;top:97px;width:314px;height:277px">
  <div class="ttl">Incoming requests by method</div>
  <div class="dots" style="left:284px"><i style="left:0"></i><i style="left:4px"></i><i style="left:8px"></i></div>
  <div class="grid" style="left:72px;top:67.0px;width:218px"></div><div class="grid" style="left:72px;top:89.9px;width:218px"></div><div class="grid" style="left:72px;top:112.7px;width:218px"></div><div class="grid" style="left:72px;top:135.6px;width:218px"></div><div class="grid" style="left:72px;top:158.4px;width:218px"></div><div class="grid" style="left:72px;top:181.3px;width:218px"></div><div class="grid" style="left:72px;top:204.1px;width:218px"></div><div class="grid" style="left:72px;top:227.0px;width:218px"></div>
  <div class="yl" style="right:247px;top:60.7px">21000 rps</div><div class="yl" style="right:247px;top:83.6px">18000 rps</div><div class="yl" style="right:247px;top:106.4px">15000 rps</div><div class="yl" style="right:247px;top:129.3px">12000 rps</div><div class="yl" style="right:247px;top:152.1px">9000 rps</div><div class="yl" style="right:247px;top:175.0px">6000 rps</div><div class="yl" style="right:247px;top:197.8px">3000 rps</div><div class="yl" style="right:247px;top:220.7px">0 rps</div>
  <svg class="abs" style="left:72px;top:67px" width="218" height="161" viewBox="0 0 218 161"><path fill="#04b17d" d="M0.00 160V12.8h0.77V160zM0.75 160V24.8h0.77V160zM1.50 160V15.2h0.77V160zM2.26 160V14.8h0.77V160zM3.01 160V14.1h0.77V160zM3.76 160V14.0h0.77V160zM4.51 160V14.8h0.77V160zM5.26 160V28.2h0.77V160zM6.01 160V28.0h0.77V160zM6.77 160V27.6h0.77V160zM7.52 160V26.4h0.77V160zM8.27 160V27.2h0.77V160zM9.02 160V28.3h0.77V160zM9.77 160V20.7h0.77V160zM10.52 160V13.8h0.77V160zM11.28 160V21.6h0.77V160zM12.03 160V20.8h0.77V160zM12.78 160V19.7h0.77V160zM13.53 160V26.0h0.77V160zM14.28 160V26.4h0.77V160zM15.03 160V25.0h0.77V160zM15.79 160V26.5h0.77V160zM16.54 160V14.9h0.77V160zM17.29 160V14.8h0.77V160zM18.04 160V22.4h0.77V160zM18.79 160V22.4h0.77V160zM19.54 160V21.1h0.77V160zM20.30 160V19.9h0.77V160zM21.05 160V27.2h0.77V160zM21.80 160V27.4h0.77V160zM22.55 160V24.1h0.77V160zM23.30 160V23.5h0.77V160zM24.06 160V23.7h0.77V160zM24.81 160V27.0h0.77V160zM25.56 160V26.4h0.77V160zM26.31 160V26.8h0.77V160zM27.06 160V18.0h0.77V160zM27.81 160V17.4h0.77V160zM28.57 160V21.4h0.77V160zM29.32 160V21.6h0.77V160zM30.07 160V21.1h0.77V160zM30.82 160V15.2h0.77V160zM31.57 160V16.2h0.77V160zM32.32 160V15.4h0.77V160zM33.08 160V24.8h0.77V160zM33.83 160V26.6h0.77V160zM34.58 160V13.5h0.77V160zM35.33 160V12.3h0.77V160zM36.08 160V13.6h0.77V160zM36.83 160V25.9h0.77V160zM37.59 160V26.9h0.77V160zM38.34 160V27.7h0.77V160zM39.09 160V27.0h0.77V160zM39.84 160V19.4h0.77V160zM40.59 160V12.2h0.77V160zM41.34 160V22.3h0.77V160zM42.10 160V12.5h0.77V160zM42.85 160V17.1h0.77V160zM43.60 160V24.4h0.77V160zM44.35 160V17.2h0.77V160zM45.10 160V13.0h0.77V160zM45.86 160V28.2h0.77V160zM46.61 160V28.5h0.77V160zM47.36 160V16.3h0.77V160zM48.11 160V17.3h0.77V160zM48.86 160V25.4h0.77V160zM49.61 160V25.1h0.77V160zM50.37 160V25.3h0.77V160zM51.12 160V15.3h0.77V160zM51.87 160V13.2h0.77V160zM52.62 160V14.6h0.77V160zM53.37 160V12.6h0.77V160zM54.12 160V21.2h0.77V160zM54.88 160V19.7h0.77V160zM55.63 160V21.6h0.77V160zM56.38 160V17.2h0.77V160zM57.13 160V16.5h0.77V160zM57.88 160V20.4h0.77V160zM58.63 160V20.2h0.77V160zM59.39 160V20.1h0.77V160zM60.14 160V14.4h0.77V160zM60.89 160V21.6h0.77V160zM61.64 160V28.3h0.77V160zM62.39 160V11.8h0.77V160zM63.14 160V12.1h0.77V160zM63.90 160V23.3h0.77V160zM64.65 160V23.7h0.77V160zM65.40 160V24.0h0.77V160zM66.15 160V13.9h0.77V160zM66.90 160V14.0h0.77V160zM67.66 160V12.1h0.77V160zM68.41 160V12.2h0.77V160zM69.16 160V19.2h0.77V160zM69.91 160V20.0h0.77V160zM70.66 160V18.9h0.77V160zM71.41 160V24.1h0.77V160zM72.17 160V12.1h0.77V160zM72.92 160V12.8h0.77V160zM73.67 160V12.9h0.77V160zM74.42 160V13.7h0.77V160zM75.17 160V15.4h0.77V160zM75.92 160V14.4h0.77V160zM76.68 160V27.4h0.77V160zM77.43 160V28.0h0.77V160zM78.18 160V28.8h0.77V160zM78.93 160V17.8h0.77V160zM79.68 160V16.7h0.77V160zM80.43 160V17.7h0.77V160zM81.19 160V26.7h0.77V160zM81.94 160V24.9h0.77V160zM82.69 160V26.3h0.77V160zM83.44 160V15.4h0.77V160zM84.19 160V14.1h0.77V160zM84.94 160V11.5h0.77V160zM85.70 160V12.5h0.77V160zM86.45 160V24.0h0.77V160zM87.20 160V18.6h0.77V160zM87.95 160V17.2h0.77V160zM88.70 160V17.7h0.77V160zM89.46 160V15.0h0.77V160zM90.21 160V26.7h0.77V160zM90.96 160V27.5h0.77V160zM91.71 160V26.8h0.77V160zM92.46 160V22.2h0.77V160zM93.21 160V24.2h0.77V160zM93.97 160V27.4h0.77V160zM94.72 160V28.0h0.77V160zM95.47 160V20.7h0.77V160zM96.22 160V21.8h0.77V160zM96.97 160V28.6h0.77V160zM97.72 160V27.3h0.77V160zM98.48 160V14.5h0.77V160zM99.23 160V19.4h0.77V160zM99.98 160V20.0h0.77V160zM100.73 160V19.2h0.77V160zM101.48 160V12.8h0.77V160zM102.23 160V14.4h0.77V160zM102.99 160V12.3h0.77V160zM103.74 160V27.9h0.77V160zM104.49 160V28.2h0.77V160zM105.24 160V29.2h0.77V160zM105.99 160V27.9h0.77V160zM106.74 160V28.3h0.77V160zM107.50 160V24.8h0.77V160zM108.25 160V19.2h0.77V160zM109.00 160V18.2h0.77V160zM109.75 160V29.9h0.77V160zM110.50 160V28.6h0.77V160zM111.26 160V28.4h0.77V160zM112.01 160V23.4h0.77V160zM112.76 160V20.1h0.77V160zM113.51 160V26.5h0.77V160zM114.26 160V27.4h0.77V160zM115.01 160V13.9h0.77V160zM115.77 160V12.9h0.77V160zM116.52 160V14.3h0.77V160zM117.27 160V14.7h0.77V160zM118.02 160V14.6h0.77V160zM118.77 160V14.4h0.77V160zM119.52 160V24.1h0.77V160zM120.28 160V24.7h0.77V160zM121.03 160V24.0h0.77V160zM121.78 160V17.9h0.77V160zM122.53 160V17.7h0.77V160zM123.28 160V17.9h0.77V160zM124.03 160V15.7h0.77V160zM124.79 160V15.2h0.77V160zM125.54 160V15.8h0.77V160zM126.29 160V27.1h0.77V160zM127.04 160V27.6h0.77V160zM127.79 160V28.5h0.77V160zM128.54 160V23.6h0.77V160zM129.30 160V21.7h0.77V160zM130.05 160V24.5h0.77V160zM130.80 160V26.0h0.77V160zM131.55 160V24.2h0.77V160zM132.30 160V25.5h0.77V160zM133.06 160V25.1h0.77V160zM133.81 160V20.3h0.77V160zM134.56 160V22.1h0.77V160zM135.31 160V19.7h0.77V160zM136.06 160V21.0h0.77V160zM136.81 160V18.6h0.77V160zM137.57 160V26.5h0.77V160zM138.32 160V26.8h0.77V160zM139.07 160V26.1h0.77V160zM139.82 160V27.5h0.77V160zM140.57 160V28.5h0.77V160zM141.32 160V27.5h0.77V160zM142.08 160V21.9h0.77V160zM142.83 160V16.3h0.77V160zM143.58 160V16.8h0.77V160zM144.33 160V13.1h0.77V160zM145.08 160V13.6h0.77V160zM145.83 160V13.8h0.77V160zM146.59 160V13.7h0.77V160zM147.34 160V14.1h0.77V160zM148.09 160V18.0h0.77V160zM148.84 160V20.7h0.77V160zM149.59 160V21.8h0.77V160zM150.34 160V22.8h0.77V160zM151.10 160V23.0h0.77V160zM151.85 160V13.6h0.77V160zM152.60 160V12.4h0.77V160zM153.35 160V27.6h0.77V160zM154.10 160V28.4h0.77V160zM154.86 160V28.1h0.77V160zM155.61 160V19.7h0.77V160zM156.36 160V21.6h0.77V160zM157.11 160V21.5h0.77V160zM157.86 160V21.1h0.77V160zM158.61 160V13.3h0.77V160zM159.37 160V12.4h0.77V160zM160.12 160V17.5h0.77V160zM160.87 160V15.4h0.77V160zM161.62 160V17.1h0.77V160zM162.37 160V25.8h0.77V160zM163.12 160V26.1h0.77V160zM163.88 160V18.7h0.77V160zM164.63 160V19.4h0.77V160zM165.38 160V18.7h0.77V160zM166.13 160V20.1h0.77V160zM166.88 160V14.7h0.77V160zM167.63 160V14.5h0.77V160zM168.39 160V16.2h0.77V160zM169.14 160V15.2h0.77V160zM169.89 160V14.5h0.77V160zM170.64 160V13.1h0.77V160zM171.39 160V13.4h0.77V160zM172.14 160V22.3h0.77V160zM172.90 160V23.4h0.77V160zM173.65 160V22.2h0.77V160zM174.40 160V27.7h0.77V160zM175.15 160V28.2h0.77V160zM175.90 160V28.8h0.77V160zM176.66 160V19.0h0.77V160zM177.41 160V19.0h0.77V160zM178.16 160V18.8h0.77V160zM178.91 160V16.9h0.77V160zM179.66 160V17.0h0.77V160zM180.41 160V16.3h0.77V160zM181.17 160V19.4h0.77V160zM181.92 160V20.9h0.77V160zM182.67 160V20.8h0.77V160zM183.42 160V19.1h0.77V160zM184.17 160V12.6h0.77V160zM184.92 160V13.4h0.77V160zM185.68 160V13.8h0.77V160zM186.43 160V13.4h0.77V160zM187.18 160V19.2h0.77V160zM187.93 160V18.5h0.77V160zM188.68 160V19.9h0.77V160zM189.43 160V20.9h0.77V160zM190.19 160V21.9h0.77V160zM190.94 160V18.1h0.77V160zM191.69 160V16.1h0.77V160zM192.44 160V24.8h0.77V160zM193.19 160V18.3h0.77V160zM193.94 160V15.3h0.77V160zM194.70 160V15.3h0.77V160zM195.45 160V17.1h0.77V160zM196.20 160V11.7h0.77V160zM196.95 160V13.4h0.77V160zM197.70 160V12.4h0.77V160zM198.46 160V13.9h0.77V160zM199.21 160V14.7h0.77V160zM199.96 160V23.3h0.77V160zM200.71 160V23.9h0.77V160zM201.46 160V28.7h0.77V160zM202.21 160V21.0h0.77V160zM202.97 160V20.2h0.77V160zM203.72 160V22.2h0.77V160zM204.47 160V22.0h0.77V160zM205.22 160V23.1h0.77V160zM205.97 160V26.1h0.77V160zM206.72 160V26.0h0.77V160zM207.48 160V20.3h0.77V160zM208.23 160V19.3h0.77V160zM208.98 160V19.6h0.77V160zM209.73 160V28.3h0.77V160zM210.48 160V12.4h0.77V160zM211.23 160V10.7h0.77V160zM211.99 160V11.3h0.77V160zM212.74 160V10.9h0.77V160zM213.49 160V20.1h0.77V160zM214.24 160V28.9h0.77V160zM214.99 160V27.4h0.77V160zM215.74 160V15.7h0.77V160zM216.50 160V15.9h0.77V160zM217.25 160V23.8h0.77V160z"/><rect x="0" y="160" width="218" height="1" fill="#1b1f2b" opacity="0.6"/><line x1="217.5" y1="0" x2="217.5" y2="160" stroke="#222737" stroke-width="1" stroke-dasharray="2 2" opacity="0.8"/></svg>
  <div class="xl" style="left:85.5px;top:234px">Jan 25</div><div class="xl" style="left:157.0px;top:234px">Jan 26</div><div class="xl" style="left:229.0px;top:234px">Jan 27</div>
  <div class="lg" style="left:12.8px;top:255.5px"><span class="sq" style="background:#0ea5e9"></span><span style="margin-right:9.4px">200</span><span class="sq" style="background:#5ccaca"></span><span style="margin-right:9.4px">404</span><span class="sq" style="background:#10b981"></span><span style="margin-right:9.4px">503</span></div>
  
</div>
<div class="card" style="left:253px;top:384px;width:314px;height:277px">
  <div class="ttl">Processed requests by service</div>
  <div class="dots" style="left:284px"><i style="left:0"></i><i style="left:4px"></i><i style="left:8px"></i></div>
  <div class="grid" style="left:72px;top:67.0px;width:218px"></div><div class="grid" style="left:72px;top:93.7px;width:218px"></div><div class="grid" style="left:72px;top:120.3px;width:218px"></div><div class="grid" style="left:72px;top:147.0px;width:218px"></div><div class="grid" style="left:72px;top:173.7px;width:218px"></div><div class="grid" style="left:72px;top:200.3px;width:218px"></div><div class="grid" style="left:72px;top:227.0px;width:218px"></div>
  <div class="yl" style="right:247px;top:60.7px">30000 rps</div><div class="yl" style="right:247px;top:87.4px">25000 rps</div><div class="yl" style="right:247px;top:114.0px">20000 rps</div><div class="yl" style="right:247px;top:140.7px">15000 rps</div><div class="yl" style="right:247px;top:167.4px">10000 rps</div><div class="yl" style="right:247px;top:194.0px">5000 rps</div><div class="yl" style="right:247px;top:220.7px">0 rps</div>
  <svg class="abs" style="left:72px;top:67px" width="218" height="161" viewBox="0 0 218 161"><path fill="#55c0c0" d="M0.00 160V19.4h0.77V160zM0.75 160V12.3h0.77V160zM1.50 160V13.1h0.77V160zM2.26 160V46.8h0.77V160zM3.01 160V45.5h0.77V160zM3.76 160V22.0h0.77V160zM4.51 160V22.2h0.77V160zM5.26 160V20.8h0.77V160zM6.01 160V48.8h0.77V160zM6.77 160V14.2h0.77V160zM7.52 160V14.9h0.77V160zM8.27 160V58.0h0.77V160zM9.02 160V56.9h0.77V160zM9.77 160V58.0h0.77V160zM10.52 160V38.1h0.77V160zM11.28 160V37.3h0.77V160zM12.03 160V19.0h0.77V160zM12.78 160V18.7h0.77V160zM13.53 160V47.7h0.77V160zM14.28 160V48.4h0.77V160zM15.03 160V49.4h0.77V160zM15.79 160V49.4h0.77V160zM16.54 160V49.2h0.77V160zM17.29 160V18.1h0.77V160zM18.04 160V17.6h0.77V160zM18.79 160V17.7h0.77V160zM19.54 160V11.2h0.77V160zM20.30 160V29.7h0.77V160zM21.05 160V29.8h0.77V160zM21.80 160V59.1h0.77V160zM22.55 160V54.2h0.77V160zM23.30 160V53.7h0.77V160zM24.06 160V21.8h0.77V160zM24.81 160V35.1h0.77V160zM25.56 160V35.4h0.77V160zM26.31 160V39.8h0.77V160zM27.06 160V34.1h0.77V160zM27.81 160V34.3h0.77V160zM28.57 160V34.0h0.77V160zM29.32 160V9.9h0.77V160zM30.07 160V9.2h0.77V160zM30.82 160V43.1h0.77V160zM31.57 160V40.8h0.77V160zM32.32 160V18.8h0.77V160zM33.08 160V20.0h0.77V160zM33.83 160V37.6h0.77V160zM34.58 160V38.9h0.77V160zM35.33 160V39.5h0.77V160zM36.08 160V12.5h0.77V160zM36.83 160V13.9h0.77V160zM37.59 160V32.0h0.77V160zM38.34 160V32.2h0.77V160zM39.09 160V44.8h0.77V160zM39.84 160V44.6h0.77V160zM40.59 160V24.5h0.77V160zM41.34 160V11.1h0.77V160zM42.10 160V14.2h0.77V160zM42.85 160V12.9h0.77V160zM43.60 160V12.7h0.77V160zM44.35 160V32.4h0.77V160zM45.10 160V31.7h0.77V160zM45.86 160V19.6h0.77V160zM46.61 160V18.8h0.77V160zM47.36 160V17.7h0.77V160zM48.11 160V16.2h0.77V160zM48.86 160V15.4h0.77V160zM49.61 160V53.0h0.77V160zM50.37 160V52.2h0.77V160zM51.12 160V51.1h0.77V160zM51.87 160V16.9h0.77V160zM52.62 160V17.5h0.77V160zM53.37 160V50.0h0.77V160zM54.12 160V49.8h0.77V160zM54.88 160V33.0h0.77V160zM55.63 160V31.6h0.77V160zM56.38 160V37.7h0.77V160zM57.13 160V37.6h0.77V160zM57.88 160V37.0h0.77V160zM58.63 160V25.7h0.77V160zM59.39 160V53.9h0.77V160zM60.14 160V52.5h0.77V160zM60.89 160V53.3h0.77V160zM61.64 160V19.2h0.77V160zM62.39 160V18.7h0.77V160zM63.14 160V20.1h0.77V160zM63.90 160V20.1h0.77V160zM64.65 160V20.4h0.77V160zM65.40 160V57.7h0.77V160zM66.15 160V56.2h0.77V160zM66.90 160V13.7h0.77V160zM67.66 160V12.9h0.77V160zM68.41 160V11.5h0.77V160zM69.16 160V39.0h0.77V160zM69.91 160V43.7h0.77V160zM70.66 160V42.0h0.77V160zM71.41 160V14.4h0.77V160zM72.17 160V50.4h0.77V160zM72.92 160V52.0h0.77V160zM73.67 160V52.0h0.77V160zM74.42 160V32.0h0.77V160zM75.17 160V13.8h0.77V160zM75.92 160V44.4h0.77V160zM76.68 160V44.5h0.77V160zM77.43 160V43.3h0.77V160zM78.18 160V38.6h0.77V160zM78.93 160V50.8h0.77V160zM79.68 160V49.6h0.77V160zM80.43 160V50.2h0.77V160zM81.19 160V52.8h0.77V160zM81.94 160V52.9h0.77V160zM82.69 160V52.2h0.77V160zM83.44 160V25.2h0.77V160zM84.19 160V27.0h0.77V160zM84.94 160V25.6h0.77V160zM85.70 160V49.6h0.77V160zM86.45 160V48.9h0.77V160zM87.20 160V45.7h0.77V160zM87.95 160V47.3h0.77V160zM88.70 160V45.9h0.77V160zM89.46 160V43.6h0.77V160zM90.21 160V45.6h0.77V160zM90.96 160V43.9h0.77V160zM91.71 160V54.9h0.77V160zM92.46 160V54.1h0.77V160zM93.21 160V14.6h0.77V160zM93.97 160V13.0h0.77V160zM94.72 160V12.9h0.77V160zM95.47 160V49.6h0.77V160zM96.22 160V51.3h0.77V160zM96.97 160V39.3h0.77V160zM97.72 160V11.4h0.77V160zM98.48 160V13.0h0.77V160zM99.23 160V26.5h0.77V160zM99.98 160V26.9h0.77V160zM100.73 160V28.3h0.77V160zM101.48 160V15.1h0.77V160zM102.23 160V16.8h0.77V160zM102.99 160V38.6h0.77V160zM103.74 160V31.7h0.77V160zM104.49 160V31.4h0.77V160zM105.24 160V19.8h0.77V160zM105.99 160V19.7h0.77V160zM106.74 160V19.2h0.77V160zM107.50 160V22.3h0.77V160zM108.25 160V23.1h0.77V160zM109.00 160V20.3h0.77V160zM109.75 160V20.7h0.77V160zM110.50 160V20.9h0.77V160zM111.26 160V15.0h0.77V160zM112.01 160V13.8h0.77V160zM112.76 160V14.3h0.77V160zM113.51 160V39.2h0.77V160zM114.26 160V37.3h0.77V160zM115.01 160V54.7h0.77V160zM115.77 160V55.8h0.77V160zM116.52 160V55.0h0.77V160zM117.27 160V52.0h0.77V160zM118.02 160V51.8h0.77V160zM118.77 160V47.0h0.77V160zM119.52 160V13.7h0.77V160zM120.28 160V38.6h0.77V160zM121.03 160V36.4h0.77V160zM121.78 160V13.8h0.77V160zM122.53 160V16.3h0.77V160zM123.28 160V16.0h0.77V160zM124.03 160V16.5h0.77V160zM124.79 160V23.8h0.77V160zM125.54 160V24.5h0.77V160zM126.29 160V24.0h0.77V160zM127.04 160V22.3h0.77V160zM127.79 160V21.8h0.77V160zM128.54 160V60.7h0.77V160zM129.30 160V59.5h0.77V160zM130.05 160V59.5h0.77V160zM130.80 160V17.8h0.77V160zM131.55 160V16.9h0.77V160zM132.30 160V52.6h0.77V160zM133.06 160V34.4h0.77V160zM133.81 160V35.8h0.77V160zM134.56 160V35.0h0.77V160zM135.31 160V28.8h0.77V160zM136.06 160V54.6h0.77V160zM136.81 160V53.9h0.77V160zM137.57 160V53.3h0.77V160zM138.32 160V27.8h0.77V160zM139.07 160V27.4h0.77V160zM139.82 160V43.9h0.77V160zM140.57 160V44.1h0.77V160zM141.32 160V44.3h0.77V160zM142.08 160V14.3h0.77V160zM142.83 160V35.6h0.77V160zM143.58 160V35.1h0.77V160zM144.33 160V33.9h0.77V160zM145.08 160V12.5h0.77V160zM145.83 160V55.4h0.77V160zM146.59 160V12.1h0.77V160zM147.34 160V10.4h0.77V160zM148.09 160V40.5h0.77V160zM148.84 160V40.3h0.77V160zM149.59 160V41.0h0.77V160zM150.34 160V41.2h0.77V160zM151.10 160V41.5h0.77V160zM151.85 160V41.6h0.77V160zM152.60 160V13.2h0.77V160zM153.35 160V12.7h0.77V160zM154.10 160V12.9h0.77V160zM154.86 160V10.2h0.77V160zM155.61 160V11.9h0.77V160zM156.36 160V10.4h0.77V160zM157.11 160V29.8h0.77V160zM157.86 160V30.1h0.77V160zM158.61 160V22.4h0.77V160zM159.37 160V18.3h0.77V160zM160.12 160V56.3h0.77V160zM160.87 160V56.3h0.77V160zM161.62 160V47.1h0.77V160zM162.37 160V47.9h0.77V160zM163.12 160V47.7h0.77V160zM163.88 160V31.0h0.77V160zM164.63 160V29.9h0.77V160zM165.38 160V30.6h0.77V160zM166.13 160V55.2h0.77V160zM166.88 160V56.3h0.77V160zM167.63 160V56.3h0.77V160zM168.39 160V14.4h0.77V160zM169.14 160V15.4h0.77V160zM169.89 160V14.1h0.77V160zM170.64 160V48.1h0.77V160zM171.39 160V48.9h0.77V160zM172.14 160V49.1h0.77V160zM172.90 160V17.8h0.77V160zM173.65 160V34.0h0.77V160zM174.40 160V33.3h0.77V160zM175.15 160V34.1h0.77V160zM175.90 160V53.3h0.77V160zM176.66 160V37.7h0.77V160zM177.41 160V19.6h0.77V160zM178.16 160V20.8h0.77V160zM178.91 160V20.7h0.77V160zM179.66 160V40.6h0.77V160zM180.41 160V48.5h0.77V160zM181.17 160V46.9h0.77V160zM181.92 160V48.4h0.77V160zM182.67 160V46.0h0.77V160zM183.42 160V45.4h0.77V160zM184.17 160V29.6h0.77V160zM184.92 160V47.7h0.77V160zM185.68 160V48.1h0.77V160zM186.43 160V48.2h0.77V160zM187.18 160V53.4h0.77V160zM187.93 160V26.3h0.77V160zM188.68 160V17.2h0.77V160zM189.43 160V16.3h0.77V160zM190.19 160V50.4h0.77V160zM190.94 160V49.8h0.77V160zM191.69 160V25.0h0.77V160zM192.44 160V49.9h0.77V160zM193.19 160V50.8h0.77V160zM193.94 160V51.1h0.77V160zM194.70 160V39.6h0.77V160zM195.45 160V39.3h0.77V160zM196.20 160V40.0h0.77V160zM196.95 160V54.6h0.77V160zM197.70 160V55.7h0.77V160zM198.46 160V57.4h0.77V160zM199.21 160V56.2h0.77V160zM199.96 160V14.7h0.77V160zM200.71 160V14.2h0.77V160zM201.46 160V15.0h0.77V160zM202.21 160V19.2h0.77V160zM202.97 160V17.3h0.77V160zM203.72 160V18.8h0.77V160zM204.47 160V56.1h0.77V160zM205.22 160V10.9h0.77V160zM205.97 160V12.6h0.77V160zM206.72 160V12.0h0.77V160zM207.48 160V27.3h0.77V160zM208.23 160V27.9h0.77V160zM208.98 160V28.2h0.77V160zM209.73 160V13.1h0.77V160zM210.48 160V13.3h0.77V160zM211.23 160V51.0h0.77V160zM211.99 160V50.0h0.77V160zM212.74 160V12.0h0.77V160zM213.49 160V10.4h0.77V160zM214.24 160V11.7h0.77V160zM214.99 160V44.0h0.77V160zM215.74 160V13.9h0.77V160zM216.50 160V14.6h0.77V160zM217.25 160V14.7h0.77V160z"/><rect x="0" y="160" width="218" height="1" fill="#1b1f2b" opacity="0.6"/><line x1="217.5" y1="0" x2="217.5" y2="160" stroke="#222737" stroke-width="1" stroke-dasharray="2 2" opacity="0.8"/></svg>
  <div class="xl" style="left:85.5px;top:234px">Jan 25</div><div class="xl" style="left:157.0px;top:234px">Jan 26</div><div class="xl" style="left:229.0px;top:234px">Jan 27</div>
  <div class="lg" style="left:12.8px;top:255.5px"><span class="sq" style="background:#0ea5e9"></span><span style="margin-right:9.4px">service1</span><span class="sq" style="background:#5ccaca"></span><span style="margin-right:9.4px">service2</span></div>
  
</div>
<div class="card" style="left:577px;top:384px;width:314px;height:277px">
  <div class="ttl">Incoming requests by entrypoint</div>
  <div class="dots" style="left:284px"><i style="left:0"></i><i style="left:4px"></i><i style="left:8px"></i></div>
  <div class="grid" style="left:72px;top:67.0px;width:218px"></div><div class="grid" style="left:72px;top:89.9px;width:218px"></div><div class="grid" style="left:72px;top:112.7px;width:218px"></div><div class="grid" style="left:72px;top:135.6px;width:218px"></div><div class="grid" style="left:72px;top:158.4px;width:218px"></div><div class="grid" style="left:72px;top:181.3px;width:218px"></div><div class="grid" style="left:72px;top:204.1px;width:218px"></div><div class="grid" style="left:72px;top:227.0px;width:218px"></div>
  <div class="yl" style="right:247px;top:60.7px">21000 rps</div><div class="yl" style="right:247px;top:83.6px">18000 rps</div><div class="yl" style="right:247px;top:106.4px">15000 rps</div><div class="yl" style="right:247px;top:129.3px">12000 rps</div><div class="yl" style="right:247px;top:152.1px">9000 rps</div><div class="yl" style="right:247px;top:175.0px">6000 rps</div><div class="yl" style="right:247px;top:197.8px">3000 rps</div><div class="yl" style="right:247px;top:220.7px">0 rps</div>
  <svg class="abs" style="left:72px;top:67px" width="218" height="161" viewBox="0 0 218 161"><path fill="#00a0e4" d="M0.00 160V19.9h0.77V160zM0.75 160V20.7h0.77V160zM1.50 160V21.0h0.77V160zM2.26 160V45.8h0.77V160zM3.01 160V46.8h0.77V160zM3.76 160V48.0h0.77V160zM4.51 160V11.3h0.77V160zM5.26 160V11.8h0.77V160zM6.01 160V13.0h0.77V160zM6.77 160V31.9h0.77V160zM7.52 160V30.6h0.77V160zM8.27 160V25.6h0.77V160zM9.02 160V17.1h0.77V160zM9.77 160V15.5h0.77V160zM10.52 160V26.9h0.77V160zM11.28 160V28.9h0.77V160zM12.03 160V26.6h0.77V160zM12.78 160V47.6h0.77V160zM13.53 160V22.7h0.77V160zM14.28 160V45.3h0.77V160zM15.03 160V44.3h0.77V160zM15.79 160V46.2h0.77V160zM16.54 160V49.6h0.77V160zM17.29 160V10.7h0.77V160zM18.04 160V11.9h0.77V160zM18.79 160V12.1h0.77V160zM19.54 160V12.9h0.77V160zM20.30 160V34.3h0.77V160zM21.05 160V23.2h0.77V160zM21.80 160V37.1h0.77V160zM22.55 160V37.8h0.77V160zM23.30 160V13.4h0.77V160zM24.06 160V47.6h0.77V160zM24.81 160V11.4h0.77V160zM25.56 160V10.4h0.77V160zM26.31 160V43.5h0.77V160zM27.06 160V44.1h0.77V160zM27.81 160V43.9h0.77V160zM28.57 160V14.2h0.77V160zM29.32 160V23.4h0.77V160zM30.07 160V23.8h0.77V160zM30.82 160V14.9h0.77V160zM31.57 160V15.0h0.77V160zM32.32 160V12.5h0.77V160zM33.08 160V10.5h0.77V160zM33.83 160V30.2h0.77V160zM34.58 160V29.7h0.77V160zM35.33 160V47.1h0.77V160zM36.08 160V46.5h0.77V160zM36.83 160V23.0h0.77V160zM37.59 160V22.6h0.77V160zM38.34 160V38.8h0.77V160zM39.09 160V36.8h0.77V160zM39.84 160V36.5h0.77V160zM40.59 160V31.1h0.77V160zM41.34 160V30.7h0.77V160zM42.10 160V31.6h0.77V160zM42.85 160V28.0h0.77V160zM43.60 160V27.2h0.77V160zM44.35 160V11.3h0.77V160zM45.10 160V12.1h0.77V160zM45.86 160V10.4h0.77V160zM46.61 160V31.7h0.77V160zM47.36 160V33.5h0.77V160zM48.11 160V32.4h0.77V160zM48.86 160V26.5h0.77V160zM49.61 160V21.7h0.77V160zM50.37 160V23.0h0.77V160zM51.12 160V48.9h0.77V160zM51.87 160V37.1h0.77V160zM52.62 160V37.0h0.77V160zM53.37 160V25.3h0.77V160zM54.12 160V25.9h0.77V160zM54.88 160V48.7h0.77V160zM55.63 160V48.4h0.77V160zM56.38 160V48.0h0.77V160zM57.13 160V29.7h0.77V160zM57.88 160V44.4h0.77V160zM58.63 160V45.4h0.77V160zM59.39 160V45.4h0.77V160zM60.14 160V32.4h0.77V160zM60.89 160V33.0h0.77V160zM61.64 160V33.6h0.77V160zM62.39 160V21.2h0.77V160zM63.14 160V21.9h0.77V160zM63.90 160V21.7h0.77V160zM64.65 160V47.9h0.77V160zM65.40 160V47.5h0.77V160zM66.15 160V29.6h0.77V160zM66.90 160V36.8h0.77V160zM67.66 160V37.6h0.77V160zM68.41 160V36.6h0.77V160zM69.16 160V36.4h0.77V160zM69.91 160V36.6h0.77V160zM70.66 160V24.8h0.77V160zM71.41 160V24.9h0.77V160zM72.17 160V27.7h0.77V160zM72.92 160V27.6h0.77V160zM73.67 160V27.1h0.77V160zM74.42 160V17.6h0.77V160zM75.17 160V20.3h0.77V160zM75.92 160V21.7h0.77V160zM76.68 160V17.5h0.77V160zM77.43 160V17.1h0.77V160zM78.18 160V47.0h0.77V160zM78.93 160V47.6h0.77V160zM79.68 160V48.3h0.77V160zM80.43 160V37.7h0.77V160zM81.19 160V38.0h0.77V160zM81.94 160V34.2h0.77V160zM82.69 160V35.6h0.77V160zM83.44 160V34.1h0.77V160zM84.19 160V48.4h0.77V160zM84.94 160V50.1h0.77V160zM85.70 160V21.9h0.77V160zM86.45 160V31.7h0.77V160zM87.20 160V25.5h0.77V160zM87.95 160V25.4h0.77V160zM88.70 160V38.4h0.77V160zM89.46 160V25.7h0.77V160zM90.21 160V26.0h0.77V160zM90.96 160V37.7h0.77V160zM91.71 160V31.5h0.77V160zM92.46 160V31.4h0.77V160zM93.21 160V32.0h0.77V160zM93.97 160V42.5h0.77V160zM94.72 160V43.5h0.77V160zM95.47 160V31.5h0.77V160zM96.22 160V30.7h0.77V160zM96.97 160V31.3h0.77V160zM97.72 160V49.4h0.77V160zM98.48 160V48.5h0.77V160zM99.23 160V43.2h0.77V160zM99.98 160V42.6h0.77V160zM100.73 160V32.9h0.77V160zM101.48 160V31.8h0.77V160zM102.23 160V45.2h0.77V160zM102.99 160V44.9h0.77V160zM103.74 160V46.2h0.77V160zM104.49 160V22.8h0.77V160zM105.24 160V21.4h0.77V160zM105.99 160V33.3h0.77V160zM106.74 160V29.6h0.77V160zM107.50 160V29.4h0.77V160zM108.25 160V29.2h0.77V160zM109.00 160V29.6h0.77V160zM109.75 160V37.5h0.77V160zM110.50 160V22.4h0.77V160zM111.26 160V10.6h0.77V160zM112.01 160V10.0h0.77V160zM112.76 160V40.7h0.77V160zM113.51 160V40.7h0.77V160zM114.26 160V38.3h0.77V160zM115.01 160V34.3h0.77V160zM115.77 160V34.7h0.77V160zM116.52 160V46.2h0.77V160zM117.27 160V44.1h0.77V160zM118.02 160V44.3h0.77V160zM118.77 160V30.9h0.77V160zM119.52 160V30.9h0.77V160zM120.28 160V10.7h0.77V160zM121.03 160V11.5h0.77V160zM121.78 160V11.8h0.77V160zM122.53 160V10.9h0.77V160zM123.28 160V36.5h0.77V160zM124.03 160V37.9h0.77V160zM124.79 160V11.3h0.77V160zM125.54 160V34.2h0.77V160zM126.29 160V34.9h0.77V160zM127.04 160V30.3h0.77V160zM127.79 160V29.0h0.77V160zM128.54 160V29.0h0.77V160zM129.30 160V17.4h0.77V160zM130.05 160V18.7h0.77V160zM130.80 160V16.8h0.77V160zM131.55 160V37.6h0.77V160zM132.30 160V35.9h0.77V160zM133.06 160V35.5h0.77V160zM133.81 160V29.3h0.77V160zM134.56 160V49.0h0.77V160zM135.31 160V48.7h0.77V160zM136.06 160V41.4h0.77V160zM136.81 160V41.8h0.77V160zM137.57 160V43.2h0.77V160zM138.32 160V35.4h0.77V160zM139.07 160V26.1h0.77V160zM139.82 160V26.9h0.77V160zM140.57 160V27.1h0.77V160zM141.32 160V43.0h0.77V160zM142.08 160V42.0h0.77V160zM142.83 160V43.9h0.77V160zM143.58 160V44.2h0.77V160zM144.33 160V45.9h0.77V160zM145.08 160V47.0h0.77V160zM145.83 160V46.5h0.77V160zM146.59 160V12.0h0.77V160zM147.34 160V14.0h0.77V160zM148.09 160V13.3h0.77V160zM148.84 160V13.3h0.77V160zM149.59 160V14.5h0.77V160zM150.34 160V15.0h0.77V160zM151.10 160V13.6h0.77V160zM151.85 160V22.8h0.77V160zM152.60 160V24.5h0.77V160zM153.35 160V25.1h0.77V160zM154.10 160V37.1h0.77V160zM154.86 160V36.6h0.77V160zM155.61 160V38.2h0.77V160zM156.36 160V37.2h0.77V160zM157.11 160V20.7h0.77V160zM157.86 160V42.8h0.77V160zM158.61 160V44.4h0.77V160zM159.37 160V44.4h0.77V160zM160.12 160V17.7h0.77V160zM160.87 160V17.5h0.77V160zM161.62 160V31.8h0.77V160zM162.37 160V30.1h0.77V160zM163.12 160V45.0h0.77V160zM163.88 160V44.7h0.77V160zM164.63 160V11.7h0.77V160zM165.38 160V10.1h0.77V160zM166.13 160V10.3h0.77V160zM166.88 160V36.6h0.77V160zM167.63 160V36.3h0.77V160zM168.39 160V29.0h0.77V160zM169.14 160V30.1h0.77V160zM169.89 160V29.4h0.77V160zM170.64 160V22.6h0.77V160zM171.39 160V23.7h0.77V160zM172.14 160V23.1h0.77V160zM172.90 160V24.7h0.77V160zM173.65 160V22.2h0.77V160zM174.40 160V22.9h0.77V160zM175.15 160V21.5h0.77V160zM175.90 160V33.9h0.77V160zM176.66 160V16.2h0.77V160zM177.41 160V16.1h0.77V160zM178.16 160V16.5h0.77V160zM178.91 160V12.5h0.77V160zM179.66 160V36.1h0.77V160zM180.41 160V36.3h0.77V160zM181.17 160V45.9h0.77V160zM181.92 160V45.4h0.77V160zM182.67 160V27.7h0.77V160zM183.42 160V28.8h0.77V160zM184.17 160V24.7h0.77V160zM184.92 160V15.5h0.77V160zM185.68 160V15.6h0.77V160zM186.43 160V40.4h0.77V160zM187.18 160V28.2h0.77V160zM187.93 160V21.6h0.77V160zM188.68 160V21.5h0.77V160zM189.43 160V29.9h0.77V160zM190.19 160V28.0h0.77V160zM190.94 160V22.9h0.77V160zM191.69 160V22.3h0.77V160zM192.44 160V24.2h0.77V160zM193.19 160V16.9h0.77V160zM193.94 160V36.5h0.77V160zM194.70 160V24.1h0.77V160zM195.45 160V24.5h0.77V160zM196.20 160V24.0h0.77V160zM196.95 160V49.7h0.77V160zM197.70 160V50.4h0.77V160zM198.46 160V49.0h0.77V160zM199.21 160V48.0h0.77V160zM199.96 160V38.5h0.77V160zM200.71 160V39.0h0.77V160zM201.46 160V41.0h0.77V160zM202.21 160V40.1h0.77V160zM202.97 160V44.2h0.77V160zM203.72 160V43.6h0.77V160zM204.47 160V44.5h0.77V160zM205.22 160V13.8h0.77V160zM205.97 160V12.8h0.77V160zM206.72 160V13.9h0.77V160zM207.48 160V37.7h0.77V160zM208.23 160V24.8h0.77V160zM208.98 160V25.3h0.77V160zM209.73 160V28.2h0.77V160zM210.48 160V28.7h0.77V160zM211.23 160V17.2h0.77V160zM211.99 160V16.9h0.77V160zM212.74 160V18.5h0.77V160zM213.49 160V14.6h0.77V160zM214.24 160V34.8h0.77V160zM214.99 160V34.9h0.77V160zM215.74 160V29.6h0.77V160zM216.50 160V29.2h0.77V160zM217.25 160V14.1h0.77V160z"/><rect x="0" y="160" width="218" height="1" fill="#1b1f2b" opacity="0.6"/><line x1="217.5" y1="0" x2="217.5" y2="160" stroke="#222737" stroke-width="1" stroke-dasharray="2 2" opacity="0.8"/></svg>
  <div class="xl" style="left:85.5px;top:234px">Jan 25</div><div class="xl" style="left:157.0px;top:234px">Jan 26</div><div class="xl" style="left:229.0px;top:234px">Jan 27</div>
  <div class="lg" style="left:12.8px;top:255.5px"><span class="sq" style="background:#0ea5e9"></span><span style="margin-right:9.4px">Requests per second</span></div>
  
</div>
<div class="card" style="left:901px;top:384px;width:314px;height:277px">
  <div class="ttl">Open connections by entrypoint</div>
  <div class="dots" style="left:284px"><i style="left:0"></i><i style="left:4px"></i><i style="left:8px"></i></div>
  <div class="grid" style="left:46px;top:67.0px;width:244px"></div><div class="grid" style="left:46px;top:99.0px;width:244px"></div><div class="grid" style="left:46px;top:131.0px;width:244px"></div><div class="grid" style="left:46px;top:163.0px;width:244px"></div><div class="grid" style="left:46px;top:195.0px;width:244px"></div><div class="grid" style="left:46px;top:227.0px;width:244px"></div>
  <div class="yl" style="right:273px;top:60.7px">25K</div><div class="yl" style="right:273px;top:92.7px">20K</div><div class="yl" style="right:273px;top:124.7px">15K</div><div class="yl" style="right:273px;top:156.7px">10K</div><div class="yl" style="right:273px;top:188.7px">5K</div><div class="yl" style="right:273px;top:220.7px">0K</div>
  <svg class="abs" style="left:46px;top:67px" width="244" height="161" viewBox="0 0 244 161"><path fill="#df6679" d="M0.00 160V31.7h0.77V160zM0.75 160V31.1h0.77V160zM1.50 160V30.5h0.77V160zM2.25 160V25.3h0.77V160zM3.00 160V24.7h0.77V160zM3.75 160V23.7h0.77V160zM4.50 160V16.4h0.77V160zM5.26 160V34.4h0.77V160zM6.01 160V33.6h0.77V160zM6.76 160V32.5h0.77V160zM7.51 160V23.9h0.77V160zM8.26 160V22.6h0.77V160zM9.01 160V23.9h0.77V160zM9.76 160V11.8h0.77V160zM10.51 160V13.2h0.77V160zM11.26 160V11.7h0.77V160zM12.01 160V31.0h0.77V160zM12.76 160V30.2h0.77V160zM13.51 160V28.4h0.77V160zM14.26 160V36.5h0.77V160zM15.02 160V32.9h0.77V160zM15.77 160V36.6h0.77V160zM16.52 160V35.6h0.77V160zM17.27 160V37.9h0.77V160zM18.02 160V36.9h0.77V160zM18.77 160V37.9h0.77V160zM19.52 160V18.1h0.77V160zM20.27 160V17.4h0.77V160zM21.02 160V18.0h0.77V160zM21.77 160V22.0h0.77V160zM22.52 160V12.9h0.77V160zM23.27 160V28.0h0.77V160zM24.02 160V27.6h0.77V160zM24.78 160V15.2h0.77V160zM25.53 160V14.8h0.77V160zM26.28 160V13.1h0.77V160zM27.03 160V10.7h0.77V160zM27.78 160V24.7h0.77V160zM28.53 160V24.9h0.77V160zM29.28 160V24.9h0.77V160zM30.03 160V27.0h0.77V160zM30.78 160V20.0h0.77V160zM31.53 160V12.0h0.77V160zM32.28 160V12.9h0.77V160zM33.03 160V34.6h0.77V160zM33.78 160V20.9h0.77V160zM34.54 160V20.8h0.77V160zM35.29 160V19.1h0.77V160zM36.04 160V20.3h0.77V160zM36.79 160V20.6h0.77V160zM37.54 160V28.6h0.77V160zM38.29 160V29.5h0.77V160zM39.04 160V27.3h0.77V160zM39.79 160V12.8h0.77V160zM40.54 160V12.3h0.77V160zM41.29 160V12.0h0.77V160zM42.04 160V17.1h0.77V160zM42.79 160V18.2h0.77V160zM43.54 160V24.4h0.77V160zM44.30 160V24.9h0.77V160zM45.05 160V21.9h0.77V160zM45.80 160V21.4h0.77V160zM46.55 160V30.7h0.77V160zM47.30 160V31.5h0.77V160zM48.05 160V32.3h0.77V160zM48.80 160V18.5h0.77V160zM49.55 160V17.8h0.77V160zM50.30 160V18.0h0.77V160zM51.05 160V27.8h0.77V160zM51.80 160V29.4h0.77V160zM52.55 160V10.9h0.77V160zM53.30 160V10.0h0.77V160zM54.06 160V9.9h0.77V160zM54.81 160V12.9h0.77V160zM55.56 160V12.1h0.77V160zM56.31 160V13.5h0.77V160zM57.06 160V10.9h0.77V160zM57.81 160V12.7h0.77V160zM58.56 160V11.9h0.77V160zM59.31 160V31.9h0.77V160zM60.06 160V31.2h0.77V160zM60.81 160V19.8h0.77V160zM61.56 160V37.1h0.77V160zM62.31 160V36.0h0.77V160zM63.06 160V13.3h0.77V160zM63.82 160V12.0h0.77V160zM64.57 160V11.4h0.77V160zM65.32 160V34.7h0.77V160zM66.07 160V34.9h0.77V160zM66.82 160V33.5h0.77V160zM67.57 160V13.6h0.77V160zM68.32 160V35.6h0.77V160zM69.07 160V34.6h0.77V160zM69.82 160V11.5h0.77V160zM70.57 160V11.9h0.77V160zM71.32 160V10.4h0.77V160zM72.07 160V20.9h0.77V160zM72.82 160V21.1h0.77V160zM73.58 160V27.0h0.77V160zM74.33 160V28.8h0.77V160zM75.08 160V17.0h0.77V160zM75.83 160V15.0h0.77V160zM76.58 160V17.0h0.77V160zM77.33 160V15.7h0.77V160zM78.08 160V10.3h0.77V160zM78.83 160V12.0h0.77V160zM79.58 160V15.5h0.77V160zM80.33 160V15.5h0.77V160zM81.08 160V14.5h0.77V160zM81.83 160V12.7h0.77V160zM82.58 160V27.3h0.77V160zM83.34 160V13.7h0.77V160zM84.09 160V22.9h0.77V160zM84.84 160V22.9h0.77V160zM85.59 160V12.3h0.77V160zM86.34 160V14.3h0.77V160zM87.09 160V15.0h0.77V160zM87.84 160V33.4h0.77V160zM88.59 160V33.8h0.77V160zM89.34 160V33.2h0.77V160zM90.09 160V34.6h0.77V160zM90.84 160V34.0h0.77V160zM91.59 160V34.4h0.77V160zM92.34 160V22.2h0.77V160zM93.10 160V19.1h0.77V160zM93.85 160V19.3h0.77V160zM94.60 160V18.5h0.77V160zM95.35 160V20.0h0.77V160zM96.10 160V31.8h0.77V160zM96.85 160V32.0h0.77V160zM97.60 160V32.8h0.77V160zM98.35 160V18.5h0.77V160zM99.10 160V19.2h0.77V160zM99.85 160V17.3h0.77V160zM100.60 160V11.8h0.77V160zM101.35 160V11.6h0.77V160zM102.10 160V12.7h0.77V160zM102.86 160V13.0h0.77V160zM103.61 160V27.1h0.77V160zM104.36 160V23.5h0.77V160zM105.11 160V30.2h0.77V160zM105.86 160V11.1h0.77V160zM106.61 160V12.3h0.77V160zM107.36 160V13.8h0.77V160zM108.11 160V37.0h0.77V160zM108.86 160V12.5h0.77V160zM109.61 160V37.6h0.77V160zM110.36 160V38.3h0.77V160zM111.11 160V37.2h0.77V160zM111.86 160V15.0h0.77V160zM112.62 160V29.9h0.77V160zM113.37 160V30.8h0.77V160zM114.12 160V30.0h0.77V160zM114.87 160V30.3h0.77V160zM115.62 160V29.6h0.77V160zM116.37 160V29.6h0.77V160zM117.12 160V12.3h0.77V160zM117.87 160V11.0h0.77V160zM118.62 160V11.8h0.77V160zM119.37 160V15.3h0.77V160zM120.12 160V36.2h0.77V160zM120.87 160V35.0h0.77V160zM121.62 160V16.3h0.77V160zM122.38 160V10.5h0.77V160zM123.13 160V12.5h0.77V160zM123.88 160V27.2h0.77V160zM124.63 160V12.6h0.77V160zM125.38 160V15.4h0.77V160zM126.13 160V19.7h0.77V160zM126.88 160V20.4h0.77V160zM127.63 160V20.6h0.77V160zM128.38 160V13.8h0.77V160zM129.13 160V12.1h0.77V160zM129.88 160V11.5h0.77V160zM130.63 160V11.3h0.77V160zM131.38 160V21.1h0.77V160zM132.14 160V18.6h0.77V160zM132.89 160V19.5h0.77V160zM133.64 160V19.3h0.77V160zM134.39 160V31.3h0.77V160zM135.14 160V32.2h0.77V160zM135.89 160V32.3h0.77V160zM136.64 160V29.9h0.77V160zM137.39 160V16.6h0.77V160zM138.14 160V16.2h0.77V160zM138.89 160V16.7h0.77V160zM139.64 160V17.4h0.77V160zM140.39 160V16.9h0.77V160zM141.14 160V24.5h0.77V160zM141.90 160V25.5h0.77V160zM142.65 160V24.4h0.77V160zM143.40 160V13.6h0.77V160zM144.15 160V13.5h0.77V160zM144.90 160V34.4h0.77V160zM145.65 160V35.5h0.77V160zM146.40 160V36.6h0.77V160zM147.15 160V33.4h0.77V160zM147.90 160V34.3h0.77V160zM148.65 160V33.6h0.77V160zM149.40 160V34.0h0.77V160zM150.15 160V14.3h0.77V160zM150.90 160V25.2h0.77V160zM151.66 160V23.8h0.77V160zM152.41 160V24.7h0.77V160zM153.16 160V31.0h0.77V160zM153.91 160V12.8h0.77V160zM154.66 160V14.0h0.77V160zM155.41 160V31.0h0.77V160zM156.16 160V32.7h0.77V160zM156.91 160V30.9h0.77V160zM157.66 160V33.6h0.77V160zM158.41 160V25.8h0.77V160zM159.16 160V24.4h0.77V160zM159.91 160V24.3h0.77V160zM160.66 160V26.3h0.77V160zM161.42 160V24.8h0.77V160zM162.17 160V12.0h0.77V160zM162.92 160V37.7h0.77V160zM163.67 160V36.7h0.77V160zM164.42 160V33.2h0.77V160zM165.17 160V35.2h0.77V160zM165.92 160V13.0h0.77V160zM166.67 160V11.9h0.77V160zM167.42 160V18.7h0.77V160zM168.17 160V17.8h0.77V160zM168.92 160V19.0h0.77V160zM169.67 160V19.8h0.77V160zM170.42 160V37.2h0.77V160zM171.18 160V26.9h0.77V160zM171.93 160V20.7h0.77V160zM172.68 160V32.0h0.77V160zM173.43 160V19.3h0.77V160zM174.18 160V29.7h0.77V160zM174.93 160V30.6h0.77V160zM175.68 160V29.6h0.77V160zM176.43 160V37.8h0.77V160zM177.18 160V36.2h0.77V160zM177.93 160V37.9h0.77V160zM178.68 160V38.6h0.77V160zM179.43 160V37.5h0.77V160zM180.18 160V38.2h0.77V160zM180.94 160V21.9h0.77V160zM181.69 160V21.5h0.77V160zM182.44 160V21.5h0.77V160zM183.19 160V22.9h0.77V160zM183.94 160V12.1h0.77V160zM184.69 160V12.1h0.77V160zM185.44 160V15.0h0.77V160zM186.19 160V14.7h0.77V160zM186.94 160V32.3h0.77V160zM187.69 160V13.0h0.77V160zM188.44 160V14.8h0.77V160zM189.19 160V13.1h0.77V160zM189.94 160V34.4h0.77V160zM190.70 160V33.2h0.77V160zM191.45 160V11.8h0.77V160zM192.20 160V12.2h0.77V160zM192.95 160V12.3h0.77V160zM193.70 160V19.2h0.77V160zM194.45 160V21.0h0.77V160zM195.20 160V18.8h0.77V160zM195.95 160V26.7h0.77V160zM196.70 160V25.3h0.77V160zM197.45 160V25.3h0.77V160zM198.20 160V16.2h0.77V160zM198.95 160V16.0h0.77V160zM199.70 160V19.6h0.77V160zM200.46 160V20.3h0.77V160zM201.21 160V18.2h0.77V160zM201.96 160V17.1h0.77V160zM202.71 160V16.8h0.77V160zM203.46 160V15.7h0.77V160zM204.21 160V11.4h0.77V160zM204.96 160V13.0h0.77V160zM205.71 160V12.2h0.77V160zM206.46 160V18.8h0.77V160zM207.21 160V19.4h0.77V160zM207.96 160V10.9h0.77V160zM208.71 160V12.6h0.77V160zM209.46 160V11.7h0.77V160zM210.22 160V33.6h0.77V160zM210.97 160V33.0h0.77V160zM211.72 160V30.2h0.77V160zM212.47 160V13.8h0.77V160zM213.22 160V13.5h0.77V160zM213.97 160V33.5h0.77V160zM214.72 160V35.2h0.77V160zM215.47 160V33.6h0.77V160zM216.22 160V10.7h0.77V160zM216.97 160V11.2h0.77V160zM217.72 160V33.2h0.77V160zM218.47 160V31.0h0.77V160zM219.22 160V34.3h0.77V160zM219.98 160V34.6h0.77V160zM220.73 160V17.1h0.77V160zM221.48 160V16.1h0.77V160zM222.23 160V21.8h0.77V160zM222.98 160V18.8h0.77V160zM223.73 160V23.8h0.77V160zM224.48 160V23.7h0.77V160zM225.23 160V33.0h0.77V160zM225.98 160V32.2h0.77V160zM226.73 160V31.7h0.77V160zM227.48 160V18.9h0.77V160zM228.23 160V33.9h0.77V160zM228.98 160V17.9h0.77V160zM229.74 160V17.3h0.77V160zM230.49 160V17.9h0.77V160zM231.24 160V18.7h0.77V160zM231.99 160V23.0h0.77V160zM232.74 160V24.4h0.77V160zM233.49 160V16.6h0.77V160zM234.24 160V14.9h0.77V160zM234.99 160V15.1h0.77V160zM235.74 160V24.2h0.77V160zM236.49 160V23.7h0.77V160zM237.24 160V11.6h0.77V160zM237.99 160V11.7h0.77V160zM238.74 160V24.7h0.77V160zM239.50 160V10.5h0.77V160zM240.25 160V12.1h0.77V160zM241.00 160V12.4h0.77V160zM241.75 160V17.2h0.77V160zM242.50 160V18.6h0.77V160zM243.25 160V17.5h0.77V160z"/><rect x="0" y="160" width="244" height="1" fill="#1b1f2b" opacity="0.6"/><line x1="243.5" y1="0" x2="243.5" y2="160" stroke="#222737" stroke-width="1" stroke-dasharray="2 2" opacity="0.8"/></svg>
  <div class="xl" style="left:63.0px;top:234px">Jan 25</div><div class="xl" style="left:143.5px;top:234px">Jan 26</div><div class="xl" style="left:224.0px;top:234px">Jan 27</div>
  <div class="lg" style="left:12.8px;top:255.5px"><span class="sq" style="background:#0ea5e9"></span><span style="margin-right:9.4px"><span style="letter-spacing:-0.45px">GET</span></span><span class="sq" style="background:#5ccaca"></span><span style="margin-right:9.4px"><span style="letter-spacing:-0.35px">POST</span></span><span class="sq" style="background:#10b981"></span><span style="margin-right:9.4px"><span style="letter-spacing:-0.4px">HEAD</span></span><span class="sq" style="background:#e38d2c"></span><span style="margin-right:9.4px"><span style="letter-spacing:-0.35px">OPTIONS</span></span></div>
  <div class="lg" style="left:280px;top:254px">+1</div>
</div>

</body></html>
